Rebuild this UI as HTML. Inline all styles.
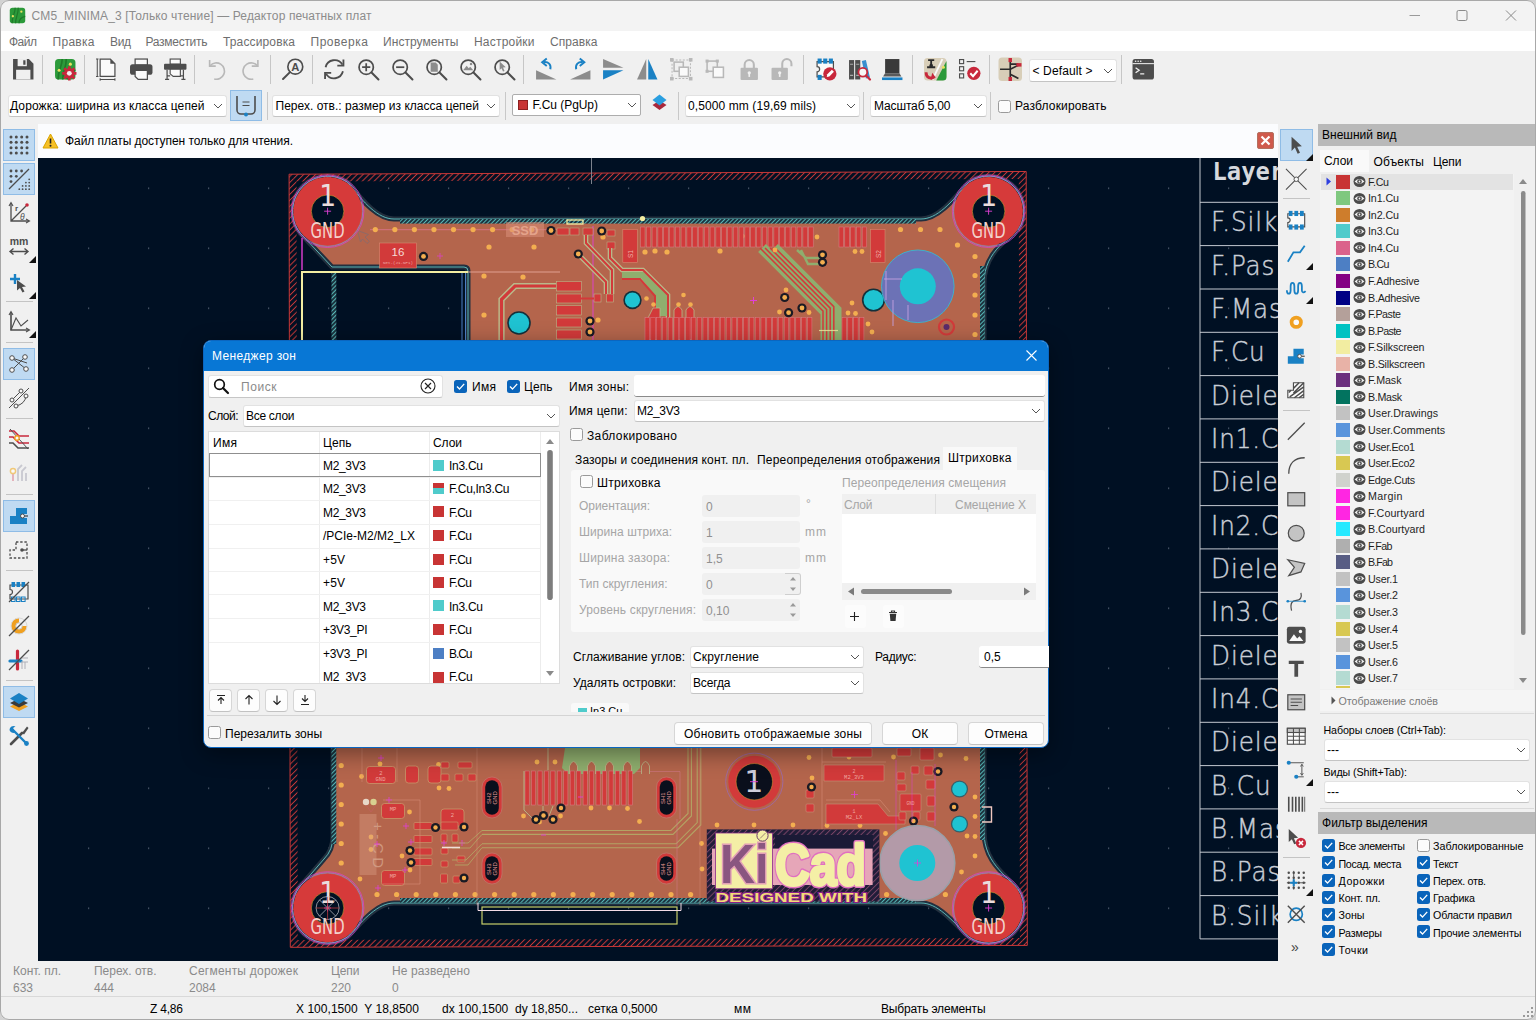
<!DOCTYPE html>
<html lang="ru"><head><meta charset="utf-8"><title>KiCad PCB Editor</title>
<style>
html,body{margin:0;padding:0;}
body{width:1536px;height:1020px;overflow:hidden;position:relative;background:#f0f0f0;font-family:"Liberation Sans",sans-serif;font-size:12px;}
.a{position:absolute;box-sizing:border-box;}
.t{position:absolute;white-space:pre;}
svg{overflow:visible;}
svg text{font-family:"Liberation Sans",sans-serif;}
</style></head>
<body>
<div class="a" style="left:0px;top:0px;width:1536px;height:31px;background:#f3f3f3;"></div>
<span class="t" style="top:7.5px;font-size:12px;line-height:16px;color:#8c8c8c;left:31.5px;letter-spacing:0.134px;">CM5_MINIMA_3 [Только чтение] — Редактор печатных плат</span>
<svg class="a" style="left:1409px;top:10px;" width="12" height="12" viewBox="0 0 12 12"><path d="M0.5 5.5 H11" stroke="#9a9a9a" stroke-width="1"/></svg>
<svg class="a" style="left:1456px;top:10px;" width="12" height="12" viewBox="0 0 12 12"><rect x="1" y="0.5" width="10" height="10" rx="1.5" fill="none" stroke="#8a8a8a" stroke-width="1"/></svg>
<svg class="a" style="left:1505px;top:10px;" width="12" height="12" viewBox="0 0 12 12"><path d="M1 0.5 L11 10.5 M11 0.5 L1 10.5" stroke="#8a8a8a" stroke-width="1"/></svg>
<div class="a" style="left:0px;top:31px;width:1536px;height:19.5px;background:#fff;"></div>
<span class="t" style="top:33.5px;font-size:12px;line-height:16px;color:#6e6e6e;left:9px;letter-spacing:-0.505px;">Файл</span>
<span class="t" style="top:33.5px;font-size:12px;line-height:16px;color:#6e6e6e;left:52.5px;letter-spacing:0.291px;">Правка</span>
<span class="t" style="top:33.5px;font-size:12px;line-height:16px;color:#6e6e6e;left:110px;letter-spacing:-0.359px;">Вид</span>
<span class="t" style="top:33.5px;font-size:12px;line-height:16px;color:#6e6e6e;left:145.5px;letter-spacing:-0.281px;">Разместить</span>
<span class="t" style="top:33.5px;font-size:12px;line-height:16px;color:#6e6e6e;left:223px;letter-spacing:0.138px;">Трассировка</span>
<span class="t" style="top:33.5px;font-size:12px;line-height:16px;color:#6e6e6e;left:310.5px;letter-spacing:0.536px;">Проверка</span>
<span class="t" style="top:33.5px;font-size:12px;line-height:16px;color:#6e6e6e;left:383px;letter-spacing:0.067px;">Инструменты</span>
<span class="t" style="top:33.5px;font-size:12px;line-height:16px;color:#6e6e6e;left:474px;letter-spacing:0.207px;">Настройки</span>
<span class="t" style="top:33.5px;font-size:12px;line-height:16px;color:#6e6e6e;left:550px;letter-spacing:0.070px;">Справка</span>
<div class="a" style="left:0px;top:50.5px;width:1536px;height:73.5px;background:#f0f0f0;"></div>
<div class="a" style="left:8px;top:95px;width:219px;height:22px;background:#fff;border:1px solid #e2e2e2;border-bottom-color:#c4c4c4;border-radius:3px;"></div>
<span class="t" style="top:98px;font-size:12px;line-height:16px;color:#000;left:10px;letter-spacing:0.107px;">Дорожка: ширина из класса цепей</span>
<svg class="a" style="left:213px;top:103.0px;" width="10" height="6" viewBox="0 0 10 6"><path d="M1 1 L5 5 L9 1" fill="none" stroke="#555" stroke-width="1"/></svg>
<div class="a" style="left:230px;top:90px;width:32px;height:31px;background:#bfdaf2;border:1px solid #8fbce6;"></div>
<div class="a" style="left:267px;top:92px;width:1px;height:28px;background:#c8c8c8;"></div>
<div class="a" style="left:272px;top:95px;width:228px;height:22px;background:#fff;border:1px solid #e2e2e2;border-bottom-color:#c4c4c4;border-radius:3px;"></div>
<span class="t" style="top:98px;font-size:12px;line-height:16px;color:#000;left:275.5px;letter-spacing:0.018px;">Перех. отв.: размер из класса цепей</span>
<svg class="a" style="left:486px;top:103.0px;" width="10" height="6" viewBox="0 0 10 6"><path d="M1 1 L5 5 L9 1" fill="none" stroke="#555" stroke-width="1"/></svg>
<div class="a" style="left:504.5px;top:92px;width:1px;height:28px;background:#c8c8c8;"></div>
<div class="a" style="left:511.5px;top:94px;width:129px;height:22px;background:#fff;border:1px solid #adadad;border-radius:2px;"></div>
<span class="t" style="top:97px;font-size:12px;line-height:16px;color:#000;left:532.5px;letter-spacing:-0.053px;">F.Cu (PgUp)</span>
<svg class="a" style="left:626.5px;top:102.0px;" width="10" height="6" viewBox="0 0 10 6"><path d="M1 1 L5 5 L9 1" fill="none" stroke="#555" stroke-width="1"/></svg>
<div class="a" style="left:518px;top:100px;width:10px;height:10px;background:#c83434;border:1px solid #8c2020;"></div>
<div class="a" style="left:678px;top:92px;width:1px;height:28px;background:#c8c8c8;"></div>
<div class="a" style="left:685.3px;top:95px;width:174.5px;height:22px;background:#fff;border:1px solid #e2e2e2;border-bottom-color:#c4c4c4;border-radius:3px;"></div>
<span class="t" style="top:98px;font-size:12px;line-height:16px;color:#000;left:688px;letter-spacing:0.093px;">0,5000 mm (19,69 mils)</span>
<svg class="a" style="left:845.8px;top:103.0px;" width="10" height="6" viewBox="0 0 10 6"><path d="M1 1 L5 5 L9 1" fill="none" stroke="#555" stroke-width="1"/></svg>
<div class="a" style="left:863px;top:92px;width:1px;height:28px;background:#c8c8c8;"></div>
<div class="a" style="left:870px;top:95px;width:117px;height:22px;background:#fff;border:1px solid #e2e2e2;border-bottom-color:#c4c4c4;border-radius:3px;"></div>
<span class="t" style="top:98px;font-size:12px;line-height:16px;color:#000;left:874px;letter-spacing:-0.139px;">Масштаб 5,00</span>
<svg class="a" style="left:973px;top:103.0px;" width="10" height="6" viewBox="0 0 10 6"><path d="M1 1 L5 5 L9 1" fill="none" stroke="#555" stroke-width="1"/></svg>
<div class="a" style="left:990px;top:92px;width:1px;height:28px;background:#c8c8c8;"></div>
<div class="a" style="left:998px;top:99.5px;width:13px;height:13px;background:#fbfbfb;border:1px solid #9a9a9a;border-radius:2.5px;"></div>
<span class="t" style="top:98px;font-size:12px;line-height:16px;color:#000;left:1015px;letter-spacing:0.165px;">Разблокировать</span>
<div class="a" style="left:36px;top:124px;width:1242px;height:34px;background:#fbfcfe;"></div>
<span class="t" style="top:133px;font-size:12px;line-height:16px;color:#000;left:65px;letter-spacing:-0.063px;">Файл платы доступен только для чтения.</span>
<svg class="a" style="left:42px;top:133px;" width="17" height="16" viewBox="0 0 17 16"><path d="M8.5 1 L16 15 H1 Z" fill="#f6c026" stroke="#d9a400" stroke-width="1" stroke-linejoin="round"/><path d="M8.5 5.5 V10.5" stroke="#222" stroke-width="1.6"/><circle cx="8.5" cy="12.7" r="1" fill="#222"/></svg>
<div class="a" style="left:1257px;top:132px;width:17px;height:17px;background:#cf5a4c;border:1px solid #b4705f;border-radius:2px;"><svg width="15" height="15" viewBox="0 0 15 15" style="position:absolute;left:0;top:0"><path d="M3.5 3.5 L11.5 11.5 M11.5 3.5 L3.5 11.5" stroke="#fff" stroke-width="2.2"/></svg></div>
<div class="a" style="left:0px;top:124px;width:38px;height:837px;background:#f0f0f0;"></div>
<div class="a" style="left:38px;top:158px;width:1240px;height:803px;background:#001023;"></div>
<div class="a" style="left:1278px;top:124px;width:38px;height:837px;background:#f0f0f0;"></div>
<div class="a" style="left:0px;top:961px;width:1536px;height:39px;background:#f0f0f0;"></div>
<div class="a" style="left:0px;top:996px;width:1536px;height:1px;background:#d9d9d9;"></div>
<span class="t" style="top:963px;font-size:12px;line-height:16px;color:#8a8a8a;left:13px;letter-spacing:0.004px;">Конт. пл.</span>
<span class="t" style="top:979.5px;font-size:12px;line-height:16px;color:#8a8a8a;left:13px;">633</span>
<span class="t" style="top:963px;font-size:12px;line-height:16px;color:#8a8a8a;left:94px;letter-spacing:-0.017px;">Перех. отв.</span>
<span class="t" style="top:979.5px;font-size:12px;line-height:16px;color:#8a8a8a;left:94px;">444</span>
<span class="t" style="top:963px;font-size:12px;line-height:16px;color:#8a8a8a;left:189px;letter-spacing:0.229px;">Сегменты дорожек</span>
<span class="t" style="top:979.5px;font-size:12px;line-height:16px;color:#8a8a8a;left:189px;">2084</span>
<span class="t" style="top:963px;font-size:12px;line-height:16px;color:#8a8a8a;left:331px;letter-spacing:-0.089px;">Цепи</span>
<span class="t" style="top:979.5px;font-size:12px;line-height:16px;color:#8a8a8a;left:331px;">220</span>
<span class="t" style="top:963px;font-size:12px;line-height:16px;color:#8a8a8a;left:392px;letter-spacing:0.089px;">Не разведено</span>
<span class="t" style="top:979.5px;font-size:12px;line-height:16px;color:#8a8a8a;left:392px;">0</span>
<div class="a" style="left:0px;top:997px;width:1536px;height:23px;background:#f0f0f0;"></div>
<span class="t" style="top:1000.5px;font-size:12px;line-height:16px;color:#000;left:150px;letter-spacing:-0.206px;">Z 4,86</span>
<span class="t" style="top:1000.5px;font-size:12px;line-height:16px;color:#000;left:296px;letter-spacing:0.033px;">X 100,1500  Y 18,8500</span>
<span class="t" style="top:1000.5px;font-size:12px;line-height:16px;color:#000;left:442px;letter-spacing:0.023px;">dx 100,1500  dy 18,850...</span>
<span class="t" style="top:1000.5px;font-size:12px;line-height:16px;color:#000;left:588px;letter-spacing:-0.045px;">сетка 0,5000</span>
<span class="t" style="top:1000.5px;font-size:12px;line-height:16px;color:#000;left:734px;letter-spacing:0.500px;">мм</span>
<span class="t" style="top:1000.5px;font-size:12px;line-height:16px;color:#000;left:881px;letter-spacing:-0.158px;">Выбрать элементы</span>
<svg class="a" style="left:0;top:0" width="1536" height="1020" viewBox="0 0 1536 1020"><defs>
<pattern id="hr" width="4.2" height="4.2" patternUnits="userSpaceOnUse" patternTransform="rotate(-45)"><path d="M0 2.1H4.2" stroke="#c83838" stroke-width="1"/></pattern>
<pattern id="ht" width="3" height="3" patternUnits="userSpaceOnUse" patternTransform="rotate(-45)"><rect width="3" height="3" fill="#1c3440"/><path d="M0 1.5H3" stroke="#58bcbc" stroke-width="0.95"/></pattern>
<pattern id="hl" width="4.2" height="4.2" patternUnits="userSpaceOnUse" patternTransform="rotate(-45)"><path d="M0 2.1H4.2" stroke="#7a4466" stroke-width="1"/></pattern>
<pattern id="gd" x="28" y="7.6" width="60" height="60" patternUnits="userSpaceOnUse"><rect x="0" y="0" width="1.2" height="1.2" fill="#5f6a7c"/></pattern>
<clipPath id="cv"><rect x="38" y="158" width="1240" height="803"/></clipPath>
</defs><g clip-path="url(#cv)"><rect x="38" y="157" width="1240" height="804" fill="url(#gd)"/><path d="M 394 219 H 921 C 937 219 951 203 968.4 182.4 A 35.2 35.2 0 0 1 1021.0 225.0 C 1012 238 984 250 984 283 V 832 C 984 866 1012 878 1021.0 894.2 A 35.2 35.2 0 0 1 968.4 936.8 C 951 919 937 903 921 903 H 394 C 378 903 364 919 347.8 936.8 A 35.2 35.2 0 0 1 305.0 881.0 L 324 859 Q 333 850 333 836 V 640 H 468 V 271 Q 468 267 464 267 H 332 L 305.0 238.2 A 35.2 35.2 0 0 1 347.8 182.4 C 364 203 378 219 394 219 Z" fill="#b4654c"/><path d="M 394 219 H 921 C 937 219 951 203 968.4 182.4 A 35.2 35.2 0 0 1 1021.0 225.0 C 1012 238 984 250 984 283 V 832 C 984 866 1012 878 1021.0 894.2 A 35.2 35.2 0 0 1 968.4 936.8 C 951 919 937 903 921 903 H 394 C 378 903 364 919 347.8 936.8 A 35.2 35.2 0 0 1 305.0 881.0 L 324 859 Q 333 850 333 836 V 640 H 468 V 271 Q 468 267 464 267 H 332 L 305.0 238.2 A 35.2 35.2 0 0 1 347.8 182.4 C 364 203 378 219 394 219 Z" fill="none" stroke="#22303f" stroke-width="5"/><path d="M 394 219 H 921 C 937 219 951 203 968.4 182.4 A 35.2 35.2 0 0 1 1021.0 225.0 C 1012 238 984 250 984 283 V 832 C 984 866 1012 878 1021.0 894.2 A 35.2 35.2 0 0 1 968.4 936.8 C 951 919 937 903 921 903 H 394 C 378 903 364 919 347.8 936.8 A 35.2 35.2 0 0 1 305.0 881.0 L 324 859 Q 333 850 333 836 V 640 H 468 V 271 Q 468 267 464 267 H 332 L 305.0 238.2 A 35.2 35.2 0 0 1 347.8 182.4 C 364 203 378 219 394 219 Z" fill="none" stroke="#5fc4c4" stroke-width="0.9" transform="translate(0 0)"/><rect x="400" y="219" width="516" height="4.6" fill="url(#ht)"/><rect x="400" y="898" width="516" height="4.6" fill="url(#ht)"/><rect x="331.5" y="272" width="4.8" height="572" fill="url(#ht)"/><rect x="980" y="266" width="4.6" height="574" fill="url(#ht)"/><polygon points="289.1,174.2 1026.2,171.5 1018.8,178.9 296.5,181.6" fill="url(#hr)"/><polygon points="1026.2,171.5 1027.3,945.4 1019.9,938.0 1018.8,178.9" fill="url(#hr)"/><polygon points="1027.3,945.4 290.3,947.3 297.7,939.9 1019.9,938.0" fill="url(#hr)"/><polygon points="290.3,947.3 289.1,174.2 296.5,181.6 297.7,939.9" fill="url(#hr)"/><polygon points="289.1,174.2 1026.2,171.5 1027.3,945.4 290.3,947.3" fill="none" stroke="#c83838" stroke-width="1"/><path d="M462 272 V340 M465.5 272 V340" stroke="#4d7fc4" stroke-width="1"/><path d="M302 238 V270" stroke="#e13fd6" stroke-width="1.4"/><path d="M302 340 V272 H468" fill="none" stroke="#f2eda1" stroke-width="2"/><path d="M468 272 H560" stroke="#e0a090" stroke-width="1"/><path d="M370 229.7 H560" stroke="#e77aa0" stroke-width="0.8" opacity=".8"/><circle cx="375.3" cy="229.6" r="2.6" fill="#f3ae50"/><circle cx="394.85" cy="229.6" r="2.6" fill="#f3ae50"/><circle cx="414.40000000000003" cy="229.6" r="2.6" fill="#f3ae50"/><circle cx="433.95000000000005" cy="229.6" r="2.6" fill="#f3ae50"/><circle cx="453.5" cy="229.6" r="2.6" fill="#f3ae50"/><circle cx="473.05" cy="229.6" r="2.6" fill="#f3ae50"/><circle cx="492.6" cy="229.6" r="2.6" fill="#f3ae50"/><circle cx="512.15" cy="229.6" r="2.6" fill="#f3ae50"/><circle cx="531.7" cy="229.6" r="2.6" fill="#f3ae50"/><circle cx="489" cy="247" r="2.6" fill="#f3ae50"/><circle cx="534" cy="247" r="2.6" fill="#f3ae50"/><circle cx="484" cy="276" r="2.6" fill="#f3ae50"/><circle cx="523" cy="277" r="2.6" fill="#f3ae50"/><circle cx="484" cy="315" r="2.6" fill="#f3ae50"/><circle cx="598" cy="320" r="2.6" fill="#f3ae50"/><circle cx="603" cy="237" r="2.6" fill="#f3ae50"/><circle cx="645" cy="252" r="2.6" fill="#f3ae50"/><circle cx="667" cy="252" r="2.6" fill="#f3ae50"/><circle cx="742" cy="236" r="2.6" fill="#f3ae50"/><circle cx="720" cy="251" r="2.6" fill="#f3ae50"/><circle cx="655" cy="251" r="2.6" fill="#f3ae50"/><rect x="379.5" y="243" width="37" height="25" fill="#d23a3a" stroke="#d58a70" stroke-width="0.6"/><text x="398" y="255.5" text-anchor="middle" font-size="11.5" fill="#f6dcd6">16</text><text x="398" y="263.5" text-anchor="middle" font-size="4.2" fill="#f0b0a8" style="font-family:'Liberation Mono',monospace">Net-(J1-NP1)</text><circle cx="423.5" cy="256.4" r="4.6" fill="#1a1a24"/><circle cx="423.5" cy="256.4" r="2.4" fill="#f3ae50"/><path d="M437 256 h6 M440 253 v6" stroke="#e13fd6" stroke-width="1" opacity=".7"/><rect x="506" y="222" width="38" height="15" fill="#d9907a" opacity=".55"/><text x="525" y="234.5" text-anchor="middle" font-size="13" fill="#e8a890" opacity=".9" style="font-weight:700">SSD</text><rect x="567" y="220" width="16" height="4" fill="none" stroke="#f2eda1" stroke-width="1.3"/><circle cx="642.5" cy="218.5" r="2.6" fill="#f2eda1"/><path d="M556 286 H515 L501.5 299.5 V340" fill="none" stroke="#b9b98a" stroke-width="6.2"/><path d="M556 286 H515 L501.5 299.5 V340" fill="none" stroke="#d23a3a" stroke-width="3.2"/><rect x="556.5" y="281.5" width="25" height="9.5" fill="#d23a3a" stroke="#b9b98a" stroke-width="0.6"/><rect x="556.5" y="294" width="25" height="9" fill="#d23a3a" stroke="#b9b98a" stroke-width="0.6"/><rect x="556.5" y="305.5" width="25" height="9.5" fill="#d23a3a" stroke="#b9b98a" stroke-width="0.6"/><rect x="556.5" y="318" width="25" height="9" fill="#d23a3a" stroke="#b9b98a" stroke-width="0.6"/><rect x="556.5" y="330" width="25" height="9" fill="#d23a3a" stroke="#b9b98a" stroke-width="0.6"/><path d="M593 226 V340" stroke="#e13fd6" stroke-width="0.9"/><rect x="594" y="294" width="7" height="8" fill="#d23a3a" stroke="#b9b98a" stroke-width="0.6"/><rect x="606.4" y="294" width="7" height="8" fill="#d23a3a" stroke="#b9b98a" stroke-width="0.6"/><path d="M581 298.5 H594" stroke="#d23a3a" stroke-width="2"/><rect x="557" y="228" width="12" height="7" fill="#d23a3a" stroke="#b9b98a" stroke-width="0.5"/><rect x="583" y="228" width="10" height="7" fill="#d23a3a" stroke="#b9b98a" stroke-width="0.5"/><rect x="607" y="230" width="8" height="6" fill="#d23a3a" stroke="#b9b98a" stroke-width="0.5"/><rect x="607" y="242" width="8" height="7" fill="#d23a3a" stroke="#b9b98a" stroke-width="0.5"/><rect x="570" y="228" width="9" height="7" fill="#d23a3a" stroke="#b9b98a" stroke-width="0.5"/><path d="M586 235 V243 L612 270 V294" fill="none" stroke="#b9b98a" stroke-width="4.6"/><path d="M580 256 L606 282 V294" fill="none" stroke="#b9b98a" stroke-width="4.6"/><path d="M610 248 V258 L622 270 H643 L668 295 V318" fill="none" stroke="#b9b98a" stroke-width="4.6"/><path d="M622 277 H640 L657 294 V318" fill="none" stroke="#b9b98a" stroke-width="4.6"/><path d="M622 272 H644 L667 294 V316 H656 V297 L641 278 H622Z" fill="#8fae6e"/><path d="M586 235 V243 L612 270 V294" fill="none" stroke="#d23a3a" stroke-width="2"/><path d="M580 256 L606 282 V294" fill="none" stroke="#d23a3a" stroke-width="2"/><path d="M610 248 V258 L622 270 H643 L668 295 V318" fill="none" stroke="#d23a3a" stroke-width="2"/><path d="M622 279 H640 L655 296 V318" fill="none" stroke="#d23a3a" stroke-width="2"/><circle cx="578.3" cy="254" r="4.6" fill="#1a1a24"/><circle cx="578.3" cy="254" r="2.4" fill="#f3ae50"/><circle cx="601.7" cy="231" r="4.6" fill="#1a1a24"/><circle cx="601.7" cy="231" r="2.4" fill="#f3ae50"/><circle cx="551" cy="230.5" r="4.6" fill="#1a1a24"/><circle cx="551" cy="230.5" r="2.4" fill="#f3ae50"/><circle cx="590" cy="321" r="4.6" fill="#1a1a24"/><circle cx="590" cy="321" r="2.4" fill="#f3ae50"/><circle cx="590" cy="332" r="4.6" fill="#1a1a24"/><circle cx="590" cy="332" r="2.4" fill="#f3ae50"/><rect x="622.8" y="229.5" width="14.5" height="33" fill="#d23a3a" stroke="#d58a70" stroke-width="0.6"/><rect x="870.5" y="229.5" width="14.5" height="33" fill="#d23a3a" stroke="#d58a70" stroke-width="0.6"/><text transform="translate(633 258) rotate(-90)" font-size="6.5" fill="#f0b0a8">S1</text><text transform="translate(880.5 258) rotate(-90)" font-size="6.5" fill="#f0b0a8">S2</text><circle cx="519" cy="323" r="11.799999999999999" fill="#14303a"/><circle cx="519" cy="323" r="10.2" fill="#1fc3d2"/><circle cx="632.5" cy="300" r="9.2" fill="#14303a"/><circle cx="632.5" cy="300" r="7.6" fill="#1fc3d2"/><circle cx="873.5" cy="300" r="11.6" fill="#14303a"/><circle cx="873.5" cy="300" r="10" fill="#1fc3d2"/><path d="M648 340 V318 L653 308 H660 V340Z M674 340 V310 Q678 303 682 310 V340Z M686 340 V310 Q690 303 694 310 V340Z" fill="#d23a3a" stroke="#b9b98a" stroke-width="0.8"/><circle cx="653.5" cy="304.5" r="2.3" fill="#f3ae50"/><circle cx="678.5" cy="304.5" r="2.3" fill="#f3ae50"/><circle cx="690.5" cy="304.5" r="2.3" fill="#f3ae50"/><circle cx="646.5" cy="298.5" r="2.3" fill="#f3ae50"/><circle cx="683.5" cy="295" r="2.3" fill="#f3ae50"/><rect x="640.5" y="227" width="4.5" height="20" fill="#d23a3a" stroke="#d9808a" stroke-width="0.5"/><rect x="646.3" y="227" width="4.5" height="20" fill="#d23a3a" stroke="#d9808a" stroke-width="0.5"/><rect x="652.1" y="227" width="4.5" height="20" fill="#d23a3a" stroke="#d9808a" stroke-width="0.5"/><rect x="657.9" y="227" width="4.5" height="20" fill="#d23a3a" stroke="#d9808a" stroke-width="0.5"/><rect x="663.7" y="227" width="4.5" height="20" fill="#d23a3a" stroke="#d9808a" stroke-width="0.5"/><rect x="669.5" y="227" width="4.5" height="20" fill="#d23a3a" stroke="#d9808a" stroke-width="0.5"/><rect x="675.3" y="227" width="4.5" height="20" fill="#d23a3a" stroke="#d9808a" stroke-width="0.5"/><rect x="681.1" y="227" width="4.5" height="20" fill="#d23a3a" stroke="#d9808a" stroke-width="0.5"/><rect x="686.9" y="227" width="4.5" height="20" fill="#d23a3a" stroke="#d9808a" stroke-width="0.5"/><rect x="692.7" y="227" width="4.5" height="20" fill="#d23a3a" stroke="#d9808a" stroke-width="0.5"/><rect x="698.5" y="227" width="4.5" height="20" fill="#d23a3a" stroke="#d9808a" stroke-width="0.5"/><rect x="704.3" y="227" width="4.5" height="20" fill="#d23a3a" stroke="#d9808a" stroke-width="0.5"/><rect x="710.1" y="227" width="4.5" height="20" fill="#d23a3a" stroke="#d9808a" stroke-width="0.5"/><rect x="715.9" y="227" width="4.5" height="20" fill="#d23a3a" stroke="#d9808a" stroke-width="0.5"/><rect x="721.7" y="227" width="4.5" height="20" fill="#d23a3a" stroke="#d9808a" stroke-width="0.5"/><rect x="727.5" y="227" width="4.5" height="20" fill="#d23a3a" stroke="#d9808a" stroke-width="0.5"/><rect x="733.3" y="227" width="4.5" height="20" fill="#d23a3a" stroke="#d9808a" stroke-width="0.5"/><rect x="739.1" y="227" width="4.5" height="20" fill="#d23a3a" stroke="#d9808a" stroke-width="0.5"/><rect x="744.9" y="227" width="4.5" height="20" fill="#d23a3a" stroke="#d9808a" stroke-width="0.5"/><rect x="750.7" y="227" width="4.5" height="20" fill="#d23a3a" stroke="#d9808a" stroke-width="0.5"/><rect x="756.5" y="227" width="4.5" height="20" fill="#d23a3a" stroke="#d9808a" stroke-width="0.5"/><rect x="762.3" y="227" width="4.5" height="20" fill="#d23a3a" stroke="#d9808a" stroke-width="0.5"/><rect x="768.1" y="227" width="4.5" height="20" fill="#d23a3a" stroke="#d9808a" stroke-width="0.5"/><rect x="773.9" y="227" width="4.5" height="20" fill="#d23a3a" stroke="#d9808a" stroke-width="0.5"/><rect x="779.7" y="227" width="4.5" height="20" fill="#d23a3a" stroke="#d9808a" stroke-width="0.5"/><rect x="785.5" y="227" width="4.5" height="20" fill="#d23a3a" stroke="#d9808a" stroke-width="0.5"/><rect x="791.3" y="227" width="4.5" height="20" fill="#d23a3a" stroke="#d9808a" stroke-width="0.5"/><rect x="797.1" y="227" width="4.5" height="20" fill="#d23a3a" stroke="#d9808a" stroke-width="0.5"/><rect x="802.9" y="227" width="4.5" height="20" fill="#d23a3a" stroke="#d9808a" stroke-width="0.5"/><rect x="808.7" y="227" width="4.5" height="20" fill="#d23a3a" stroke="#d9808a" stroke-width="0.5"/><rect x="839.0" y="227" width="4.5" height="20" fill="#d23a3a" stroke="#d9808a" stroke-width="0.5"/><rect x="844.8" y="227" width="4.5" height="20" fill="#d23a3a" stroke="#d9808a" stroke-width="0.5"/><rect x="850.6" y="227" width="4.5" height="20" fill="#d23a3a" stroke="#d9808a" stroke-width="0.5"/><rect x="856.4" y="227" width="4.5" height="20" fill="#d23a3a" stroke="#d9808a" stroke-width="0.5"/><rect x="862.2" y="227" width="4.5" height="20" fill="#d23a3a" stroke="#d9808a" stroke-width="0.5"/><rect x="645.0" y="317.5" width="4.5" height="23.5" fill="#d23a3a" stroke="#d9808a" stroke-width="0.5"/><rect x="650.8" y="317.5" width="4.5" height="23.5" fill="#d23a3a" stroke="#d9808a" stroke-width="0.5"/><rect x="656.6" y="317.5" width="4.5" height="23.5" fill="#d23a3a" stroke="#d9808a" stroke-width="0.5"/><rect x="662.4" y="317.5" width="4.5" height="23.5" fill="#d23a3a" stroke="#d9808a" stroke-width="0.5"/><rect x="668.2" y="317.5" width="4.5" height="23.5" fill="#d23a3a" stroke="#d9808a" stroke-width="0.5"/><rect x="674.0" y="317.5" width="4.5" height="23.5" fill="#d23a3a" stroke="#d9808a" stroke-width="0.5"/><rect x="679.8" y="317.5" width="4.5" height="23.5" fill="#d23a3a" stroke="#d9808a" stroke-width="0.5"/><rect x="685.6" y="317.5" width="4.5" height="23.5" fill="#d23a3a" stroke="#d9808a" stroke-width="0.5"/><rect x="691.4" y="317.5" width="4.5" height="23.5" fill="#d23a3a" stroke="#d9808a" stroke-width="0.5"/><rect x="697.2" y="317.5" width="4.5" height="23.5" fill="#d23a3a" stroke="#d9808a" stroke-width="0.5"/><rect x="703.0" y="317.5" width="4.5" height="23.5" fill="#d23a3a" stroke="#d9808a" stroke-width="0.5"/><rect x="708.8" y="317.5" width="4.5" height="23.5" fill="#d23a3a" stroke="#d9808a" stroke-width="0.5"/><rect x="714.6" y="317.5" width="4.5" height="23.5" fill="#d23a3a" stroke="#d9808a" stroke-width="0.5"/><rect x="720.4" y="317.5" width="4.5" height="23.5" fill="#d23a3a" stroke="#d9808a" stroke-width="0.5"/><rect x="726.2" y="317.5" width="4.5" height="23.5" fill="#d23a3a" stroke="#d9808a" stroke-width="0.5"/><rect x="732.0" y="317.5" width="4.5" height="23.5" fill="#d23a3a" stroke="#d9808a" stroke-width="0.5"/><rect x="737.8" y="317.5" width="4.5" height="23.5" fill="#d23a3a" stroke="#d9808a" stroke-width="0.5"/><rect x="743.6" y="317.5" width="4.5" height="23.5" fill="#d23a3a" stroke="#d9808a" stroke-width="0.5"/><rect x="749.4" y="317.5" width="4.5" height="23.5" fill="#d23a3a" stroke="#d9808a" stroke-width="0.5"/><rect x="755.2" y="317.5" width="4.5" height="23.5" fill="#d23a3a" stroke="#d9808a" stroke-width="0.5"/><rect x="761.0" y="317.5" width="4.5" height="23.5" fill="#d23a3a" stroke="#d9808a" stroke-width="0.5"/><rect x="766.8" y="317.5" width="4.5" height="23.5" fill="#d23a3a" stroke="#d9808a" stroke-width="0.5"/><rect x="772.6" y="317.5" width="4.5" height="23.5" fill="#d23a3a" stroke="#d9808a" stroke-width="0.5"/><rect x="778.4" y="317.5" width="4.5" height="23.5" fill="#d23a3a" stroke="#d9808a" stroke-width="0.5"/><rect x="784.2" y="317.5" width="4.5" height="23.5" fill="#d23a3a" stroke="#d9808a" stroke-width="0.5"/><rect x="790.0" y="317.5" width="4.5" height="23.5" fill="#d23a3a" stroke="#d9808a" stroke-width="0.5"/><rect x="795.8" y="317.5" width="4.5" height="23.5" fill="#d23a3a" stroke="#d9808a" stroke-width="0.5"/><rect x="801.6" y="317.5" width="4.5" height="23.5" fill="#d23a3a" stroke="#d9808a" stroke-width="0.5"/><rect x="807.4" y="317.5" width="4.5" height="23.5" fill="#d23a3a" stroke="#d9808a" stroke-width="0.5"/><rect x="842.0" y="317.5" width="4.5" height="23.5" fill="#d23a3a" stroke="#d9808a" stroke-width="0.5"/><rect x="847.8" y="317.5" width="4.5" height="23.5" fill="#d23a3a" stroke="#d9808a" stroke-width="0.5"/><rect x="853.6" y="317.5" width="4.5" height="23.5" fill="#d23a3a" stroke="#d9808a" stroke-width="0.5"/><rect x="859.4" y="317.5" width="4.5" height="23.5" fill="#d23a3a" stroke="#d9808a" stroke-width="0.5"/><path d="M762 248 L826 312 V340 M774 248 L836 310 V340" fill="none" stroke="#8fae6e" stroke-width="11"/><path d="M760.0 248 L823.0 311.0 V340" fill="none" stroke="#d23a3a" stroke-width="1.5"/><path d="M765.04 248 L826.6 309.56 V340" fill="none" stroke="#d23a3a" stroke-width="1.5"/><path d="M770.08 248 L830.2 308.12 V340" fill="none" stroke="#d23a3a" stroke-width="1.5"/><path d="M775.12 248 L833.8 306.68 V340" fill="none" stroke="#d23a3a" stroke-width="1.5"/><path d="M797 250 L806 258 H821 M801 250 L808 264 H821" fill="none" stroke="#8fae6e" stroke-width="2.4"/><circle cx="822.5" cy="254.8" r="4.6" fill="#1a1a24"/><circle cx="822.5" cy="254.8" r="2.4" fill="#f3ae50"/><circle cx="822.5" cy="262.3" r="4.6" fill="#1a1a24"/><circle cx="822.5" cy="262.3" r="2.4" fill="#f3ae50"/><circle cx="784.7" cy="297.5" r="4.6" fill="#1a1a24"/><circle cx="784.7" cy="297.5" r="2.4" fill="#f3ae50"/><circle cx="788.6" cy="312.7" r="4.6" fill="#1a1a24"/><circle cx="788.6" cy="312.7" r="2.4" fill="#f3ae50"/><circle cx="802" cy="308" r="4.6" fill="#1a1a24"/><circle cx="802" cy="308" r="2.4" fill="#f3ae50"/><circle cx="817" cy="237" r="2.4" fill="#f3ae50"/><circle cx="775" cy="250" r="2.4" fill="#f3ae50"/><circle cx="786" cy="290" r="2.4" fill="#f3ae50"/><circle cx="779.5" cy="312" r="2.4" fill="#f3ae50"/><circle cx="809" cy="312.5" r="2.4" fill="#f3ae50"/><circle cx="852" cy="303" r="2.4" fill="#f3ae50"/><circle cx="848" cy="313" r="2.4" fill="#f3ae50"/><circle cx="855.5" cy="313.5" r="2.4" fill="#f3ae50"/><circle cx="855" cy="251.5" r="2.4" fill="#f3ae50"/><circle cx="862" cy="251.5" r="2.4" fill="#f3ae50"/><circle cx="868" cy="324" r="2.4" fill="#f3ae50"/><circle cx="872" cy="332" r="2.4" fill="#f3ae50"/><path d="M750 300.5 h7 M753.5 297 v7" stroke="#e13fd6" stroke-width="1"/><path d="M819 330.5 H838" stroke="#f2eda1" stroke-width="1.2" opacity=".8"/><circle cx="917.8" cy="286.3" r="36.3" fill="#6c72b6" stroke="#38b8d0" stroke-width="0.9"/><circle cx="917.8" cy="286.3" r="18" fill="#1fc3d2"/><path d="M884 279 H902 M886 271 V300 M893 300 V326 M908 305 V320" stroke="#c4a0e0" stroke-width="0.9" fill="none"/><circle cx="946.5" cy="327" r="7.5" fill="none" stroke="#d23a3a" stroke-width="2.2"/><circle cx="946.5" cy="327" r="3" fill="#5a2a6a"/><circle cx="900.5" cy="229.5" r="2.6" fill="#f3ae50"/><circle cx="920.5" cy="229.5" r="2.6" fill="#f3ae50"/><circle cx="940" cy="229.5" r="2.6" fill="#f3ae50"/><circle cx="957.5" cy="245" r="2.6" fill="#f3ae50"/><circle cx="975" cy="256.5" r="2.6" fill="#f3ae50"/><circle cx="975" cy="275.5" r="2.6" fill="#f3ae50"/><circle cx="975" cy="295" r="2.6" fill="#f3ae50"/><circle cx="975" cy="315" r="2.6" fill="#f3ae50"/><circle cx="975" cy="334.5" r="2.6" fill="#f3ae50"/><path d="M357.5 230.5 L368.5 234.5 L365 237 L369.5 241.5 L367 243.5 L362.5 239 L360.5 242Z" fill="none" stroke="#8a6a6a" stroke-width="0.9"/><circle cx="341.2" cy="765.5" r="2.6" fill="#f3ae50"/><circle cx="341.2" cy="785.0" r="2.6" fill="#f3ae50"/><circle cx="341.2" cy="804.5" r="2.6" fill="#f3ae50"/><circle cx="341.2" cy="824.0" r="2.6" fill="#f3ae50"/><circle cx="341.2" cy="843.5" r="2.6" fill="#f3ae50"/><circle cx="341.2" cy="863.0" r="2.6" fill="#f3ae50"/><circle cx="377.0" cy="894.5" r="2.6" fill="#f3ae50"/><circle cx="396.6" cy="894.5" r="2.6" fill="#f3ae50"/><circle cx="416.2" cy="894.5" r="2.6" fill="#f3ae50"/><circle cx="435.8" cy="894.5" r="2.6" fill="#f3ae50"/><circle cx="455.4" cy="894.5" r="2.6" fill="#f3ae50"/><circle cx="475.0" cy="894.5" r="2.6" fill="#f3ae50"/><circle cx="494.6" cy="894.5" r="2.6" fill="#f3ae50"/><circle cx="514.2" cy="894.5" r="2.6" fill="#f3ae50"/><circle cx="533.8" cy="894.5" r="2.6" fill="#f3ae50"/><circle cx="553.4" cy="894.5" r="2.6" fill="#f3ae50"/><circle cx="573.0" cy="894.5" r="2.6" fill="#f3ae50"/><circle cx="592.6" cy="894.5" r="2.6" fill="#f3ae50"/><circle cx="612.2" cy="894.5" r="2.6" fill="#f3ae50"/><circle cx="631.8" cy="894.5" r="2.6" fill="#f3ae50"/><circle cx="651.4000000000001" cy="894.5" r="2.6" fill="#f3ae50"/><circle cx="671.0" cy="894.5" r="2.6" fill="#f3ae50"/><circle cx="690.6" cy="894.5" r="2.6" fill="#f3ae50"/><circle cx="710.2" cy="894.5" r="2.6" fill="#f3ae50"/><circle cx="729.8" cy="894.5" r="2.6" fill="#f3ae50"/><circle cx="749.4000000000001" cy="894.5" r="2.6" fill="#f3ae50"/><circle cx="769.0" cy="894.5" r="2.6" fill="#f3ae50"/><circle cx="788.6" cy="894.5" r="2.6" fill="#f3ae50"/><circle cx="808.2" cy="894.5" r="2.6" fill="#f3ae50"/><circle cx="827.8" cy="894.5" r="2.6" fill="#f3ae50"/><circle cx="847.4000000000001" cy="894.5" r="2.6" fill="#f3ae50"/><circle cx="867.0" cy="894.5" r="2.6" fill="#f3ae50"/><circle cx="886.6" cy="894.5" r="2.6" fill="#f3ae50"/><circle cx="906.2" cy="894.5" r="2.6" fill="#f3ae50"/><circle cx="925.8000000000001" cy="894.5" r="2.6" fill="#f3ae50"/><circle cx="945.4000000000001" cy="894.5" r="2.6" fill="#f3ae50"/><circle cx="965.0" cy="894.5" r="2.6" fill="#f3ae50"/><circle cx="361.5" cy="776.5" r="2.4" fill="#f3ae50"/><circle cx="380" cy="764" r="2.4" fill="#f3ae50"/><circle cx="438.5" cy="764.5" r="2.4" fill="#f3ae50"/><circle cx="439" cy="788" r="2.4" fill="#f3ae50"/><circle cx="449" cy="788.5" r="2.4" fill="#f3ae50"/><circle cx="409.5" cy="812" r="2.4" fill="#f3ae50"/><circle cx="402" cy="856" r="2.4" fill="#f3ae50"/><circle cx="410" cy="870" r="2.4" fill="#f3ae50"/><circle cx="360" cy="879" r="2.4" fill="#f3ae50"/><circle cx="371" cy="837" r="2.4" fill="#f3ae50"/><circle cx="371" cy="849.5" r="2.4" fill="#f3ae50"/><circle cx="537" cy="762" r="2.4" fill="#f3ae50"/><circle cx="523.5" cy="816" r="2.4" fill="#f3ae50"/><circle cx="539.5" cy="822" r="2.4" fill="#f3ae50"/><circle cx="560.5" cy="816" r="2.4" fill="#f3ae50"/><circle cx="591" cy="808" r="2.4" fill="#f3ae50"/><circle cx="609.5" cy="808" r="2.4" fill="#f3ae50"/><circle cx="627.5" cy="808.5" r="2.4" fill="#f3ae50"/><circle cx="639.5" cy="821.5" r="2.4" fill="#f3ae50"/><circle cx="573.5" cy="762" r="2.4" fill="#f3ae50"/><circle cx="591" cy="762" r="2.4" fill="#f3ae50"/><circle cx="609.5" cy="762" r="2.4" fill="#f3ae50"/><circle cx="627.5" cy="762" r="2.4" fill="#f3ae50"/><circle cx="555" cy="762" r="2.4" fill="#f3ae50"/><circle cx="701.5" cy="843.5" r="2.4" fill="#f3ae50"/><circle cx="702" cy="869" r="2.4" fill="#f3ae50"/><circle cx="717" cy="825" r="2.4" fill="#f3ae50"/><circle cx="754" cy="825" r="2.4" fill="#f3ae50"/><circle cx="793" cy="825" r="2.4" fill="#f3ae50"/><circle cx="827" cy="825.5" r="2.4" fill="#f3ae50"/><circle cx="860" cy="825.5" r="2.4" fill="#f3ae50"/><circle cx="885.5" cy="833.5" r="2.4" fill="#f3ae50"/><circle cx="940.5" cy="755" r="2.4" fill="#f3ae50"/><circle cx="966" cy="758.5" r="2.4" fill="#f3ae50"/><circle cx="975" cy="797" r="2.4" fill="#f3ae50"/><circle cx="975" cy="816.5" r="2.4" fill="#f3ae50"/><circle cx="975" cy="836.5" r="2.4" fill="#f3ae50"/><circle cx="975" cy="856" r="2.4" fill="#f3ae50"/><circle cx="961.5" cy="872" r="2.4" fill="#f3ae50"/><circle cx="967" cy="836" r="2.4" fill="#f3ae50"/><circle cx="809" cy="757.5" r="2.4" fill="#f3ae50"/><circle cx="849" cy="757" r="2.4" fill="#f3ae50"/><circle cx="812" cy="778" r="2.4" fill="#f3ae50"/><circle cx="893.5" cy="757" r="2.4" fill="#f3ae50"/><rect x="366.5" y="766.5" width="29" height="17" rx="3" fill="#d23a3a" stroke="#c9a070" stroke-width="0.7"/><text x="381.0" y="774.5" text-anchor="middle" font-size="5.5" fill="#f0a8a0" style="font-family:'Liberation Mono',monospace">2</text><rect x="381.5" y="803.5" width="23" height="15" rx="3" fill="#d23a3a" stroke="#c9a070" stroke-width="0.7"/><text x="393.0" y="810.5" text-anchor="middle" font-size="5.5" fill="#f0a8a0" style="font-family:'Liberation Mono',monospace">MP</text><rect x="381.5" y="870.5" width="23" height="15" rx="3" fill="#d23a3a" stroke="#c9a070" stroke-width="0.7"/><text x="393.0" y="877.5" text-anchor="middle" font-size="5.5" fill="#f0a8a0" style="font-family:'Liberation Mono',monospace">MP</text><rect x="441" y="809" width="23" height="17" rx="3" fill="#d23a3a" stroke="#c9a070" stroke-width="0.7"/><text x="452.5" y="817.0" text-anchor="middle" font-size="5.5" fill="#f0a8a0" style="font-family:'Liberation Mono',monospace">2</text><rect x="405.5" y="766" width="13" height="17" rx="3" fill="#d23a3a" stroke="#c9a070" stroke-width="0.7"/><rect x="428" y="766" width="13" height="17" rx="3" fill="#d23a3a" stroke="#c9a070" stroke-width="0.7"/><text x="380.5" y="781" text-anchor="middle" font-size="5.5" fill="#f0a8a0" style="font-family:'Liberation Mono',monospace">GND</text><rect x="414" y="822.5" width="18" height="7" rx="1" fill="#d23a3a" stroke="#c9a070" stroke-width="0.6"/><rect x="414" y="835.5" width="18" height="7" rx="1" fill="#d23a3a" stroke="#c9a070" stroke-width="0.6"/><rect x="414" y="848" width="18" height="7" rx="1" fill="#d23a3a" stroke="#c9a070" stroke-width="0.6"/><rect x="414" y="858.5" width="18" height="7" rx="1" fill="#d23a3a" stroke="#c9a070" stroke-width="0.6"/><rect x="441" y="822" width="17" height="8" rx="1" fill="#d23a3a" stroke="#c9a070" stroke-width="0.6"/><rect x="441" y="834" width="6" height="8" rx="1" fill="#d23a3a" stroke="#c9a070" stroke-width="0.6"/><rect x="452" y="834" width="6" height="8" rx="1" fill="#d23a3a" stroke="#c9a070" stroke-width="0.6"/><rect x="441" y="848" width="7" height="6" rx="1" fill="#d23a3a" stroke="#c9a070" stroke-width="0.6"/><rect x="441" y="861" width="7" height="6" rx="1" fill="#d23a3a" stroke="#c9a070" stroke-width="0.6"/><rect x="457" y="856" width="8" height="6" rx="1" fill="#d23a3a" stroke="#c9a070" stroke-width="0.6"/><rect x="440.5" y="874" width="7" height="9" rx="1" fill="#d23a3a" stroke="#c9a070" stroke-width="0.6"/><rect x="453" y="876" width="7" height="7" rx="1" fill="#d23a3a" stroke="#c9a070" stroke-width="0.6"/><rect x="441" y="774" width="8" height="7" rx="1" fill="#d23a3a" stroke="#c9a070" stroke-width="0.6"/><rect x="455" y="774" width="8" height="7" rx="1" fill="#d23a3a" stroke="#c9a070" stroke-width="0.6"/><rect x="468" y="774" width="8" height="7" rx="1" fill="#d23a3a" stroke="#c9a070" stroke-width="0.6"/><rect x="441" y="762" width="8" height="6" rx="1" fill="#d23a3a" stroke="#c9a070" stroke-width="0.6"/><rect x="458" y="762" width="14" height="6" rx="1" fill="#d23a3a" stroke="#c9a070" stroke-width="0.6"/><circle cx="435.5" cy="827.5" r="4.6" fill="#1a1a24"/><circle cx="435.5" cy="827.5" r="2.2" fill="#f3ae50"/><circle cx="464" cy="827" r="4.6" fill="#1a1a24"/><circle cx="464" cy="827" r="2.2" fill="#f3ae50"/><circle cx="410" cy="850.5" r="4.6" fill="#1a1a24"/><circle cx="410" cy="850.5" r="2.2" fill="#f3ae50"/><circle cx="411" cy="862.5" r="4.6" fill="#1a1a24"/><circle cx="411" cy="862.5" r="2.2" fill="#f3ae50"/><circle cx="464" cy="878" r="4.6" fill="#1a1a24"/><circle cx="464" cy="878" r="2.2" fill="#f3ae50"/><rect x="359.5" y="814" width="17" height="61" fill="#d9a088" opacity=".4"/><text transform="translate(373 822) rotate(90)" font-size="15" fill="#d8a890" opacity=".75" textLength="46">+-CD</text><path d="M383 800 H420 V884 H383" fill="none" stroke="#d8907a" stroke-width="0.8" opacity=".7"/><path d="M362 748 V782 M397 748 V782 M477 748 V905" stroke="#d8907a" stroke-width="0.8" opacity=".6"/><path d="M378 758h6M381 755v6" stroke="#e13fd6" stroke-width="0.8"/><path d="M386 800h6M389 797v6" stroke="#e13fd6" stroke-width="0.8"/><path d="M374 844h6M377 841v6" stroke="#e13fd6" stroke-width="0.8"/><path d="M402 870h6M405 867v6" stroke="#e13fd6" stroke-width="0.8"/><path d="M375 888h6M378 885v6" stroke="#e13fd6" stroke-width="0.8"/><path d="M403 826h6M406 823v6" stroke="#e13fd6" stroke-width="0.8"/><path d="M408 842h6M411 839v6" stroke="#e13fd6" stroke-width="0.8"/><path d="M441 843h6M444 840v6" stroke="#e13fd6" stroke-width="0.8"/><path d="M459 843h6M462 840v6" stroke="#e13fd6" stroke-width="0.8"/><circle cx="366" cy="802" r="3.2" fill="#e8d8c8"/><circle cx="373.5" cy="802" r="3.2" fill="#d8d090"/><path d="M366 805 L371 812 L376 805" fill="none" stroke="#c06060" stroke-width="0.7"/><path d="M482 830.5 H671 L688 813.5 V748" fill="none" stroke="#b3a364" stroke-width="1.1"/><path d="M482 834.4 H673 L691.4 816 V748" fill="none" stroke="#b3a364" stroke-width="1.1"/><path d="M482 843.8 H676 L697.2 822.6 V748" fill="none" stroke="#b3a364" stroke-width="1.1"/><path d="M482 847.7 H678 L700.8 825 V748" fill="none" stroke="#b3a364" stroke-width="1.1"/><path d="M482 830.5 L468 843 H452 M482 834.4 L470 848 H452 M482 843.8 L466 860 H452 M482 847.7 L468 865 H455" fill="none" stroke="#b3a364" stroke-width="0.9"/><path d="M677 819 V905 M680 771.5 V819 M620 771.5 H680" fill="none" stroke="#d07a8a" stroke-width="0.8" opacity=".7"/><path d="M442 847.5 H460" stroke="#f0e0d8" stroke-width="1.6"/><rect x="482" y="777" width="20" height="41" rx="10" fill="#d23a3a" stroke="#c07a70" stroke-width="0.7"/><rect x="485.2" y="780.2" width="13.6" height="34.6" rx="6.8" fill="#0a0f1c"/><text transform="translate(490.5 804.0) rotate(-90)" font-size="6" fill="#e89a94">SH2</text><text transform="translate(496.5 804.5) rotate(-90)" font-size="6" fill="#e89a94">GND</text><rect x="482" y="853" width="20" height="31" rx="10" fill="#d23a3a" stroke="#c07a70" stroke-width="0.7"/><rect x="485.2" y="856.2" width="13.6" height="24.6" rx="6.8" fill="#0a0f1c"/><text transform="translate(490.5 875.0) rotate(-90)" font-size="6" fill="#e89a94">SH3</text><text transform="translate(496.5 875.5) rotate(-90)" font-size="6" fill="#e89a94">GND</text><rect x="656.5" y="777" width="20" height="41" rx="10" fill="#d23a3a" stroke="#c07a70" stroke-width="0.7"/><rect x="659.7" y="780.2" width="13.6" height="34.6" rx="6.8" fill="#0a0f1c"/><text transform="translate(665.0 804.0) rotate(-90)" font-size="6" fill="#e89a94">SH1</text><text transform="translate(671.0 804.5) rotate(-90)" font-size="6" fill="#e89a94">GND</text><rect x="656.5" y="853" width="20" height="31" rx="10" fill="#d23a3a" stroke="#c07a70" stroke-width="0.7"/><rect x="659.7" y="856.2" width="13.6" height="24.6" rx="6.8" fill="#0a0f1c"/><text transform="translate(665.0 875.0) rotate(-90)" font-size="6" fill="#e89a94">SH4</text><text transform="translate(671.0 875.5) rotate(-90)" font-size="6" fill="#e89a94">GND</text><path d="M565 748 H640 V768 L634 774 H568 L562 768Z" fill="#8fae6e"/><path d="M569.5 774 V766 Q573.5 757 577.5 766 V774" fill="#b4654c" stroke="#b9b98a" stroke-width="0.8"/><path d="M587.5 774 V766 Q591.5 757 595.5 766 V774" fill="#b4654c" stroke="#b9b98a" stroke-width="0.8"/><path d="M605.5 774 V766 Q609.5 757 613.5 766 V774" fill="#b4654c" stroke="#b9b98a" stroke-width="0.8"/><path d="M623.5 774 V766 Q627.5 757 631.5 766 V774" fill="#b4654c" stroke="#b9b98a" stroke-width="0.8"/><path d="M641.5 774 V766 Q645.5 757 649.5 766 V774" fill="#b4654c" stroke="#b9b98a" stroke-width="0.8"/><rect x="525.0" y="771" width="4.2" height="34" fill="#d23a3a" stroke="#d9808a" stroke-width="0.5"/><rect x="531.5" y="771" width="4.2" height="34" fill="#d23a3a" stroke="#d9808a" stroke-width="0.5"/><rect x="537.9" y="771" width="4.2" height="34" fill="#d23a3a" stroke="#d9808a" stroke-width="0.5"/><rect x="544.4" y="771" width="4.2" height="34" fill="#d23a3a" stroke="#d9808a" stroke-width="0.5"/><rect x="550.8" y="771" width="4.2" height="34" fill="#d23a3a" stroke="#d9808a" stroke-width="0.5"/><rect x="557.3" y="771" width="4.2" height="34" fill="#d23a3a" stroke="#d9808a" stroke-width="0.5"/><rect x="563.7" y="771" width="4.2" height="34" fill="#d23a3a" stroke="#d9808a" stroke-width="0.5"/><rect x="570.2" y="771" width="4.2" height="34" fill="#d23a3a" stroke="#d9808a" stroke-width="0.5"/><rect x="576.6" y="771" width="4.2" height="34" fill="#d23a3a" stroke="#d9808a" stroke-width="0.5"/><rect x="583.1" y="771" width="4.2" height="34" fill="#d23a3a" stroke="#d9808a" stroke-width="0.5"/><rect x="589.5" y="771" width="4.2" height="34" fill="#d23a3a" stroke="#d9808a" stroke-width="0.5"/><rect x="596.0" y="771" width="4.2" height="34" fill="#d23a3a" stroke="#d9808a" stroke-width="0.5"/><rect x="602.4" y="771" width="4.2" height="34" fill="#d23a3a" stroke="#d9808a" stroke-width="0.5"/><rect x="608.9" y="771" width="4.2" height="34" fill="#d23a3a" stroke="#d9808a" stroke-width="0.5"/><rect x="615.3" y="771" width="4.2" height="34" fill="#d23a3a" stroke="#d9808a" stroke-width="0.5"/><rect x="621.8" y="771" width="4.2" height="34" fill="#d23a3a" stroke="#d9808a" stroke-width="0.5"/><rect x="628.2" y="771" width="4.2" height="34" fill="#d23a3a" stroke="#d9808a" stroke-width="0.5"/><path d="M524 771 V810 L532 818 M543 806 V815 L536 821 M553 806 L549 816 M548 748 V770" fill="none" stroke="#b9b98a" stroke-width="0.9"/><circle cx="561" cy="808" r="4.6" fill="#1a1a24"/><circle cx="561" cy="808" r="2.2" fill="#f3ae50"/><circle cx="543.5" cy="815.5" r="4.6" fill="#1a1a24"/><circle cx="543.5" cy="815.5" r="2.2" fill="#f3ae50"/><circle cx="553" cy="819.5" r="4.6" fill="#1a1a24"/><circle cx="553" cy="819.5" r="2.2" fill="#f3ae50"/><circle cx="536" cy="819.5" r="4.6" fill="#1a1a24"/><circle cx="536" cy="819.5" r="2.2" fill="#f3ae50"/><path d="M578 797 h5 M541 835 h5" stroke="#e13fd6" stroke-width="0.9"/><rect x="482" y="907" width="195" height="17" fill="none" stroke="#c6cf6a" stroke-width="1.2"/><path d="M478 903 V910.5 H681 V903" fill="none" stroke="#f4dce6" stroke-width="1"/><path d="M700 748 V905" stroke="#d8907a" stroke-width="0.8" opacity=".5"/><circle cx="754.3" cy="781.7" r="28.6" fill="none" stroke="#9a6ab0" stroke-width="0.8"/><circle cx="754.3" cy="781.7" r="26" fill="#d23a3a"/><circle cx="754.3" cy="781.7" r="18.2" fill="#0a0f1c" stroke="#d8a030" stroke-width="0.5"/><text x="753.8" y="792.3" text-anchor="middle" font-size="30" fill="#cfcfdc" style="font-family:'DejaVu Sans',sans-serif">1</text><path d="M750 781.7 h8" stroke="#e13fd6" stroke-width="0.9"/><path d="M824 765 H884 V781 H824Z M826 804 H878 L888 816 H905 V824 H826Z" fill="#d23a3a" stroke="#c9907a" stroke-width="0.6"/><path d="M822 748 V835 M822 762 H886 M826 800 H880 L890 812" fill="none" stroke="#d8907a" stroke-width="0.8" opacity=".7"/><text x="854" y="772.5" text-anchor="middle" font-size="5" fill="#f0a8a0" style="font-family:'Liberation Mono',monospace">2</text><text x="854" y="779" text-anchor="middle" font-size="5.5" fill="#f0a8a0" style="font-family:'Liberation Mono',monospace">M2_3V3</text><text x="854" y="812.5" text-anchor="middle" font-size="5" fill="#f0a8a0" style="font-family:'Liberation Mono',monospace">1</text><text x="854" y="819" text-anchor="middle" font-size="5.5" fill="#f0a8a0" style="font-family:'Liberation Mono',monospace">M2_LX</text><path d="M851 794.5 h7 M854.5 791 v7" stroke="#e13fd6" stroke-width="0.8"/><rect x="806" y="790" width="8" height="8" rx="1" fill="#d23a3a" stroke="#c9907a" stroke-width="0.6"/><rect x="806" y="804" width="8" height="8" rx="1" fill="#d23a3a" stroke="#c9907a" stroke-width="0.6"/><rect x="897" y="772" width="8" height="8" rx="1" fill="#d23a3a" stroke="#c9907a" stroke-width="0.6"/><rect x="897" y="784" width="9" height="7" rx="1" fill="#d23a3a" stroke="#c9907a" stroke-width="0.6"/><rect x="911" y="766" width="8" height="8" rx="1" fill="#d23a3a" stroke="#c9907a" stroke-width="0.6"/><rect x="900" y="794" width="21" height="17" rx="1" fill="#d23a3a" stroke="#c9907a" stroke-width="0.6"/><rect x="924" y="766" width="9" height="9" rx="1" fill="#d23a3a" stroke="#c9907a" stroke-width="0.6"/><rect x="926" y="780" width="9" height="9" rx="1" fill="#d23a3a" stroke="#c9907a" stroke-width="0.6"/><rect x="927" y="796" width="8" height="10" rx="1" fill="#d23a3a" stroke="#c9907a" stroke-width="0.6"/><rect x="927" y="812" width="8" height="9" rx="1" fill="#d23a3a" stroke="#c9907a" stroke-width="0.6"/><rect x="913" y="812" width="7" height="8" rx="1" fill="#d23a3a" stroke="#c9907a" stroke-width="0.6"/><rect x="899" y="812" width="7" height="8" rx="1" fill="#d23a3a" stroke="#c9907a" stroke-width="0.6"/><rect x="832" y="748" width="40" height="9" rx="1" fill="#d23a3a" stroke="#c9907a" stroke-width="0.6"/><rect x="897" y="748" width="14" height="8" rx="1" fill="#d23a3a" stroke="#c9907a" stroke-width="0.6"/><rect x="920" y="748" width="14" height="12" rx="1" fill="#d23a3a" stroke="#c9907a" stroke-width="0.6"/><text x="910.5" y="805" text-anchor="middle" font-size="4.5" fill="#f0a8a0" style="font-family:'Liberation Mono',monospace">GND</text><circle cx="811.5" cy="787" r="4.6" fill="#1a1a24"/><circle cx="811.5" cy="787" r="2.2" fill="#f3ae50"/><circle cx="938" cy="771.5" r="4.6" fill="#1a1a24"/><circle cx="938" cy="771.5" r="2.2" fill="#f3ae50"/><circle cx="913.5" cy="821" r="4.6" fill="#1a1a24"/><circle cx="913.5" cy="821" r="2.2" fill="#f3ae50"/><circle cx="954" cy="807" r="4.6" fill="#1a1a24"/><circle cx="954" cy="807" r="2.2" fill="#f3ae50"/><path d="M896 760 V830 M912 772 V822 M935 764 V826" stroke="#e13fd6" stroke-width="0.7" opacity=".7"/><circle cx="959.5" cy="789" r="8.6" fill="#35606a"/><circle cx="959.5" cy="789" r="7.3" fill="#1fc3d2"/><circle cx="959.5" cy="824" r="8.6" fill="#35606a"/><circle cx="959.5" cy="824" r="7.3" fill="#1fc3d2"/><path d="M982 807 H991.5 V822 H982" fill="none" stroke="#f0c8c0" stroke-width="1.4"/><circle cx="917.3" cy="863" r="37.5" fill="#b39aa8" stroke="#9aa0a8" stroke-width="1.6"/><circle cx="917.3" cy="863" r="18" fill="#1fc3d2"/><path d="M914 863 h7 M917.5 859.5 v7" stroke="#e13fd6" stroke-width="0.8"/><rect x="706.8" y="829.4" width="172.6" height="72" fill="#1f1c38"/><rect x="706.8" y="829.4" width="172.6" height="72" fill="url(#hl)"/><rect x="775" y="835" width="98" height="14" fill="#1b1a36"/><rect x="712" y="848.6" width="160.6" height="36.4" fill="#e6a6b8"/><rect x="715.5" y="833" width="57" height="55.8" fill="#f4efa6" stroke="#8a2a8a" stroke-width="0.8"/><text x="720" y="882.8" font-size="56" fill="#8a5680" stroke="#e3a0b6" stroke-width="3.2" style="font-weight:700;paint-order:stroke" textLength="48.5" lengthAdjust="spacingAndGlyphs">Ki</text><text x="775" y="884.5" font-size="58" fill="#e070c0" stroke="#e070c0" stroke-width="6" stroke-linejoin="round" style="font-weight:700" textLength="91" lengthAdjust="spacingAndGlyphs">Cad</text><text x="775" y="884.5" font-size="58" fill="#f4efa6" stroke="#f4efa6" stroke-width="3.2" stroke-linejoin="round" style="font-weight:700" textLength="91" lengthAdjust="spacingAndGlyphs">Cad</text><circle cx="762.5" cy="835.6" r="5.6" fill="#f4efa6" stroke="#6a3a6a" stroke-width="1"/><path d="M760 838.5 L765.5 833" stroke="#8a6a6a" stroke-width="0.8"/><text x="715.5" y="901.6" font-size="12" fill="#f2dc78" stroke="#8a208a" stroke-width="1.8" style="font-weight:700;paint-order:stroke" textLength="151.5" lengthAdjust="spacingAndGlyphs">DESIGNED WITH</text><circle cx="327.6" cy="211.2" r="36.3" fill="none" stroke="#e13fd6" stroke-width="0.8" opacity=".85"/><circle cx="327.6" cy="211.2" r="35.2" fill="none" stroke="#9a7ad0" stroke-width="0.8"/><circle cx="327.6" cy="211.2" r="34.2" fill="#d63a3a"/><circle cx="327.6" cy="211.2" r="16.3" fill="#001023" stroke="#d8a030" stroke-width="0.6"/><path d="M324.1 211.2H331.1M327.6 207.7V214.7" stroke="#e13fd6" stroke-width="0.9"/><text x="327.6" y="205.89999999999998" text-anchor="middle" font-size="29.5" fill="#e9dcdc" style="font-family:'DejaVu Sans Condensed','DejaVu Sans',sans-serif;font-weight:200">1</text><text x="327.6" y="237.5" text-anchor="middle" font-size="20.5" fill="#f3d2cc" textLength="34" lengthAdjust="spacingAndGlyphs" style="font-family:'DejaVu Sans Condensed','DejaVu Sans',sans-serif;font-weight:200">GND</text><circle cx="988.6" cy="211.2" r="36.3" fill="none" stroke="#e13fd6" stroke-width="0.8" opacity=".85"/><circle cx="988.6" cy="211.2" r="35.2" fill="none" stroke="#9a7ad0" stroke-width="0.8"/><circle cx="988.6" cy="211.2" r="34.2" fill="#d63a3a"/><circle cx="988.6" cy="211.2" r="16.3" fill="#001023" stroke="#d8a030" stroke-width="0.6"/><path d="M985.1 211.2H992.1M988.6 207.7V214.7" stroke="#e13fd6" stroke-width="0.9"/><text x="988.6" y="205.89999999999998" text-anchor="middle" font-size="29.5" fill="#e9dcdc" style="font-family:'DejaVu Sans Condensed','DejaVu Sans',sans-serif;font-weight:200">1</text><text x="988.6" y="237.5" text-anchor="middle" font-size="20.5" fill="#f3d2cc" textLength="34" lengthAdjust="spacingAndGlyphs" style="font-family:'DejaVu Sans Condensed','DejaVu Sans',sans-serif;font-weight:200">GND</text><circle cx="327.6" cy="908" r="36.3" fill="none" stroke="#e13fd6" stroke-width="0.8" opacity=".85"/><circle cx="327.6" cy="908" r="35.2" fill="none" stroke="#9a7ad0" stroke-width="0.8"/><circle cx="327.6" cy="908" r="34.2" fill="#d63a3a"/><circle cx="327.6" cy="908" r="16.3" fill="#001023" stroke="#d8a030" stroke-width="0.6"/><path d="M324.1 908H331.1M327.6 904.5V911.5" stroke="#e13fd6" stroke-width="0.9"/><text x="327.6" y="902.7" text-anchor="middle" font-size="29.5" fill="#e9dcdc" style="font-family:'DejaVu Sans Condensed','DejaVu Sans',sans-serif;font-weight:200">1</text><text x="327.6" y="934.3" text-anchor="middle" font-size="20.5" fill="#f3d2cc" textLength="34" lengthAdjust="spacingAndGlyphs" style="font-family:'DejaVu Sans Condensed','DejaVu Sans',sans-serif;font-weight:200">GND</text><circle cx="988.6" cy="908" r="36.3" fill="none" stroke="#e13fd6" stroke-width="0.8" opacity=".85"/><circle cx="988.6" cy="908" r="35.2" fill="none" stroke="#9a7ad0" stroke-width="0.8"/><circle cx="988.6" cy="908" r="34.2" fill="#d63a3a"/><circle cx="988.6" cy="908" r="16.3" fill="#001023" stroke="#d8a030" stroke-width="0.6"/><path d="M985.1 908H992.1M988.6 904.5V911.5" stroke="#e13fd6" stroke-width="0.9"/><text x="988.6" y="902.7" text-anchor="middle" font-size="29.5" fill="#e9dcdc" style="font-family:'DejaVu Sans Condensed','DejaVu Sans',sans-serif;font-weight:200">1</text><text x="988.6" y="934.3" text-anchor="middle" font-size="20.5" fill="#f3d2cc" textLength="34" lengthAdjust="spacingAndGlyphs" style="font-family:'DejaVu Sans Condensed','DejaVu Sans',sans-serif;font-weight:200">GND</text><circle cx="327.6" cy="908" r="11.5" fill="none" stroke="#c8c8d0" stroke-width="0.7"/><path d="M319.5 899.9 L335.7 916.1 M335.7 899.9 L319.5 916.1" stroke="#c8c8d0" stroke-width="0.7"/><path d="M316 908 H339 M327.6 897 V920" stroke="#d04040" stroke-width="0.7"/><path d="M591.5 157 V184" stroke="#8a909a" stroke-width="0.9"/></g></svg>
<svg class="a" style="left:0;top:0" width="1536" height="1020" viewBox="0 0 1536 1020"><defs><clipPath id="lc"><rect x="1190" y="158" width="88" height="803"/></clipPath></defs><g clip-path="url(#lc)"><path d="M1200 157 V939" stroke="#c3c8d0" stroke-width="1"/><path d="M1200 202.3 H1280" stroke="#c3c8d0" stroke-width="1"/><path d="M1200 245.6 H1280" stroke="#c3c8d0" stroke-width="1"/><path d="M1200 289.0 H1280" stroke="#c3c8d0" stroke-width="1"/><path d="M1200 332.3 H1280" stroke="#c3c8d0" stroke-width="1"/><path d="M1200 375.6 H1280" stroke="#c3c8d0" stroke-width="1"/><path d="M1200 418.9 H1280" stroke="#c3c8d0" stroke-width="1"/><path d="M1200 462.3 H1280" stroke="#c3c8d0" stroke-width="1"/><path d="M1200 505.6 H1280" stroke="#c3c8d0" stroke-width="1"/><path d="M1200 548.9 H1280" stroke="#c3c8d0" stroke-width="1"/><path d="M1200 592.3 H1280" stroke="#c3c8d0" stroke-width="1"/><path d="M1200 635.6 H1280" stroke="#c3c8d0" stroke-width="1"/><path d="M1200 678.9 H1280" stroke="#c3c8d0" stroke-width="1"/><path d="M1200 722.3 H1280" stroke="#c3c8d0" stroke-width="1"/><path d="M1200 765.6 H1280" stroke="#c3c8d0" stroke-width="1"/><path d="M1200 808.9 H1280" stroke="#c3c8d0" stroke-width="1"/><path d="M1200 852.2 H1280" stroke="#c3c8d0" stroke-width="1"/><path d="M1200 895.6 H1280" stroke="#c3c8d0" stroke-width="1"/><path d="M1200 938.9 H1280" stroke="#c3c8d0" stroke-width="1"/><text x="1212.5" y="180" font-size="24.5" fill="#d6d9de" textLength="86" lengthAdjust="spacingAndGlyphs" style="font-family:'DejaVu Sans Mono',monospace;font-weight:700">Layers</text><text transform="translate(1211 231.2) scale(0.93 1)" font-size="26.5" fill="#c9ced6" stroke="#c9ced6" stroke-width="0.45" letter-spacing="1" style="font-family:'DejaVu Sans Light','DejaVu Sans',sans-serif;font-weight:200">F.Silk</text><text transform="translate(1211 274.5) scale(0.93 1)" font-size="26.5" fill="#c9ced6" stroke="#c9ced6" stroke-width="0.45" letter-spacing="1" style="font-family:'DejaVu Sans Light','DejaVu Sans',sans-serif;font-weight:200">F.Pas</text><text transform="translate(1211 317.9) scale(0.93 1)" font-size="26.5" fill="#c9ced6" stroke="#c9ced6" stroke-width="0.45" letter-spacing="1" style="font-family:'DejaVu Sans Light','DejaVu Sans',sans-serif;font-weight:200">F.Mas</text><text transform="translate(1211 361.2) scale(0.93 1)" font-size="26.5" fill="#c9ced6" stroke="#c9ced6" stroke-width="0.45" letter-spacing="1" style="font-family:'DejaVu Sans Light','DejaVu Sans',sans-serif;font-weight:200">F.Cu</text><text transform="translate(1211 404.5) scale(0.93 1)" font-size="26.5" fill="#c9ced6" stroke="#c9ced6" stroke-width="0.45" letter-spacing="1" style="font-family:'DejaVu Sans Light','DejaVu Sans',sans-serif;font-weight:200">Diele</text><text transform="translate(1211 447.8) scale(0.93 1)" font-size="26.5" fill="#c9ced6" stroke="#c9ced6" stroke-width="0.45" letter-spacing="1" style="font-family:'DejaVu Sans Light','DejaVu Sans',sans-serif;font-weight:200">In1.C</text><text transform="translate(1211 491.2) scale(0.93 1)" font-size="26.5" fill="#c9ced6" stroke="#c9ced6" stroke-width="0.45" letter-spacing="1" style="font-family:'DejaVu Sans Light','DejaVu Sans',sans-serif;font-weight:200">Diele</text><text transform="translate(1211 534.5) scale(0.93 1)" font-size="26.5" fill="#c9ced6" stroke="#c9ced6" stroke-width="0.45" letter-spacing="1" style="font-family:'DejaVu Sans Light','DejaVu Sans',sans-serif;font-weight:200">In2.C</text><text transform="translate(1211 577.8) scale(0.93 1)" font-size="26.5" fill="#c9ced6" stroke="#c9ced6" stroke-width="0.45" letter-spacing="1" style="font-family:'DejaVu Sans Light','DejaVu Sans',sans-serif;font-weight:200">Diele</text><text transform="translate(1211 621.2) scale(0.93 1)" font-size="26.5" fill="#c9ced6" stroke="#c9ced6" stroke-width="0.45" letter-spacing="1" style="font-family:'DejaVu Sans Light','DejaVu Sans',sans-serif;font-weight:200">In3.C</text><text transform="translate(1211 664.5) scale(0.93 1)" font-size="26.5" fill="#c9ced6" stroke="#c9ced6" stroke-width="0.45" letter-spacing="1" style="font-family:'DejaVu Sans Light','DejaVu Sans',sans-serif;font-weight:200">Diele</text><text transform="translate(1211 707.8) scale(0.93 1)" font-size="26.5" fill="#c9ced6" stroke="#c9ced6" stroke-width="0.45" letter-spacing="1" style="font-family:'DejaVu Sans Light','DejaVu Sans',sans-serif;font-weight:200">In4.C</text><text transform="translate(1211 751.2) scale(0.93 1)" font-size="26.5" fill="#c9ced6" stroke="#c9ced6" stroke-width="0.45" letter-spacing="1" style="font-family:'DejaVu Sans Light','DejaVu Sans',sans-serif;font-weight:200">Diele</text><text transform="translate(1211 794.5) scale(0.93 1)" font-size="26.5" fill="#c9ced6" stroke="#c9ced6" stroke-width="0.45" letter-spacing="1" style="font-family:'DejaVu Sans Light','DejaVu Sans',sans-serif;font-weight:200">B.Cu</text><text transform="translate(1211 837.8) scale(0.93 1)" font-size="26.5" fill="#c9ced6" stroke="#c9ced6" stroke-width="0.45" letter-spacing="1" style="font-family:'DejaVu Sans Light','DejaVu Sans',sans-serif;font-weight:200">B.Mas</text><text transform="translate(1211 881.1) scale(0.93 1)" font-size="26.5" fill="#c9ced6" stroke="#c9ced6" stroke-width="0.45" letter-spacing="1" style="font-family:'DejaVu Sans Light','DejaVu Sans',sans-serif;font-weight:200">B.Pas</text><text transform="translate(1211 924.5) scale(0.93 1)" font-size="26.5" fill="#c9ced6" stroke="#c9ced6" stroke-width="0.45" letter-spacing="1" style="font-family:'DejaVu Sans Light','DejaVu Sans',sans-serif;font-weight:200">B.Silk</text></g></svg>
<svg class="a" style="left:8.5px;top:7px;" width="17" height="17" viewBox="1 1 22 22"><rect x="2" y="2" width="20" height="20" rx="3.5" fill="#2c9a3a"/><path d="M5 22 C5 12 9 10 9 2 M9.5 22 C9.5 14 13 11 13 2 M14 22 C14 17 17 14 22 13" fill="none" stroke="#1f7a2a" stroke-width="1.6"/><circle cx="6" cy="13" r="1.5" fill="#e8e060"/><circle cx="17" cy="7" r="1.5" fill="#e8e060"/></svg>
<svg class="a" style="left:10.55px;top:57.25px;" width="24.5" height="24.5" viewBox="0 0 24 24"><path d="M2 2 H17.5 L22 6.5 V22 H2Z" fill="#4d4d4d"/><rect x="6.5" y="2" width="9" height="7" fill="#f0f0f0"/><rect x="12" y="3.2" width="2.2" height="4.4" fill="#4d4d4d"/><rect x="5" y="12.5" width="14" height="9.5" fill="#f0f0f0"/></svg>
<svg class="a" style="left:52.75px;top:57.25px;" width="24.5" height="24.5" viewBox="0 0 24 24"><rect x="2" y="2" width="20" height="20" rx="3.5" fill="#2c9a3a"/><path d="M5 22 C5 12 9 10 9 2 M9.5 22 C9.5 14 13 11 13 2 M14 22 C14 17 17 14 22 13" fill="none" stroke="#1f7a2a" stroke-width="1.6"/><circle cx="6" cy="13" r="1.5" fill="#e8e060"/><circle cx="17" cy="7" r="1.5" fill="#e8e060"/><circle cx="16" cy="16" r="5.2" fill="#c8283c"/><g stroke="#c8283c" stroke-width="2.6"><path d="M16 9 V23 M9 16 H23 M11 11 L21 21 M21 11 L11 21"/></g><circle cx="16" cy="16" r="2.4" fill="#f0f0f0"/></svg>
<svg class="a" style="left:93.75px;top:57.25px;" width="24.5" height="24.5" viewBox="0 0 24 24"><path d="M6 2 H16 L20.5 6.5 V19 H6Z" fill="#fafafa" stroke="#4d4d4d" stroke-width="1.2"/><path d="M16 2 V6.5 H20.5Z" fill="#4d4d4d"/><path d="M3.2 2 V19 M6 22 H20.5 M6 20.8 V23.2 M20.5 20.8 V23.2 M2 2 H4.4 M2 19 H4.4" stroke="#4d4d4d" stroke-width="1"/></svg>
<svg class="a" style="left:128.55px;top:57.25px;" width="24.5" height="24.5" viewBox="0 0 24 24"><rect x="6" y="2" width="12" height="6" fill="#fafafa" stroke="#4d4d4d" stroke-width="1.2"/><rect x="1" y="7" width="22" height="10.5" rx="2.5" fill="#4d4d4d"/><path d="M6 13 H18 V22 H9 L6 19Z" fill="#fafafa" stroke="#4d4d4d" stroke-width="1.2"/></svg>
<svg class="a" style="left:162.75px;top:57.25px;" width="24.5" height="24.5" viewBox="0 0 24 24"><rect x="7" y="2" width="10" height="5" fill="#fafafa" stroke="#4d4d4d" stroke-width="1.1"/><rect x="1" y="6.5" width="22" height="6" rx="1" fill="#4d4d4d"/><path d="M7 12 H17 V19 H10 L7 16.5Z" fill="#fafafa" stroke="#4d4d4d" stroke-width="1.1"/><path d="M4 12.5 V22 M20 12.5 V22 M2 22 H6 M18 22 H22 M4 18.5 H7 M17 18.5 H20" stroke="#4d4d4d" stroke-width="1.2"/></svg>
<svg class="a" style="left:203.75px;top:57.25px;" width="24.5" height="24.5" viewBox="0 0 24 24"><path d="M6 8.5 A8 8 0 1 1 10 21.5" fill="none" stroke="#b8b8b8" stroke-width="1.6"/><path d="M5.5 3 V9 H11.5" fill="none" stroke="#b8b8b8" stroke-width="1.6"/></svg>
<svg class="a" style="left:238.75px;top:57.25px;" width="24.5" height="24.5" viewBox="0 0 24 24"><path d="M18 8.5 A8 8 0 1 0 14 21.5" fill="none" stroke="#b8b8b8" stroke-width="1.6"/><path d="M18.5 3 V9 H12.5" fill="none" stroke="#b8b8b8" stroke-width="1.6"/></svg>
<svg class="a" style="left:280.75px;top:57.25px;" width="24.5" height="24.5" viewBox="0 0 24 24"><circle cx="14" cy="9.5" r="7.3" fill="none" stroke="#4d4d4d" stroke-width="1.6"/><path d="M8.8 14.8 L2 21.5" stroke="#4d4d4d" stroke-width="2" stroke-linecap="round"/><text x="14" y="13.5" text-anchor="middle" font-size="11" style="font-weight:700" fill="#4d4d4d">A</text></svg>
<svg class="a" style="left:322.25px;top:57.25px;" width="24.5" height="24.5" viewBox="0 0 24 24"><path d="M3.5 10 A9 9 0 0 1 20 7.5 M20.5 14 A9 9 0 0 1 4 16.5" fill="none" stroke="#4d4d4d" stroke-width="1.8"/><path d="M21 2.5 V8.5 H15 M3 21.5 V15.5 H9" fill="none" stroke="#4d4d4d" stroke-width="1.8"/></svg>
<svg class="a" style="left:356.25px;top:57.25px;" width="24.5" height="24.5" viewBox="0 0 24 24"><circle cx="10" cy="10" r="7" fill="none" stroke="#4d4d4d" stroke-width="1.7"/><path d="M15.2 15.2 L22 22" stroke="#4d4d4d" stroke-width="2" stroke-linecap="round"/><path d="M6 10 H14 M10 6 V14" stroke="#4d4d4d" stroke-width="1.7"/></svg>
<svg class="a" style="left:390.25px;top:57.25px;" width="24.5" height="24.5" viewBox="0 0 24 24"><circle cx="10" cy="10" r="7" fill="none" stroke="#4d4d4d" stroke-width="1.7"/><path d="M15.2 15.2 L22 22" stroke="#4d4d4d" stroke-width="2" stroke-linecap="round"/><path d="M6 10 H14" stroke="#4d4d4d" stroke-width="1.7"/></svg>
<svg class="a" style="left:424.25px;top:57.25px;" width="24.5" height="24.5" viewBox="0 0 24 24"><circle cx="10" cy="10" r="7" fill="none" stroke="#4d4d4d" stroke-width="1.7"/><path d="M15.2 15.2 L22 22" stroke="#4d4d4d" stroke-width="2" stroke-linecap="round"/><path d="M6.5 5.5 H11.5 L13.5 7.5 V14.5 H6.5Z" fill="#8c8c8c"/></svg>
<svg class="a" style="left:458.25px;top:57.25px;" width="24.5" height="24.5" viewBox="0 0 24 24"><circle cx="10" cy="10" r="7" fill="none" stroke="#4d4d4d" stroke-width="1.7"/><path d="M15.2 15.2 L22 22" stroke="#4d4d4d" stroke-width="2" stroke-linecap="round"/><path d="M5 13 L8.5 8.5 L10.5 11 L12 9.5 L15 13Z" fill="#8c8c8c"/><circle cx="12.8" cy="6.8" r="1.2" fill="#8c8c8c"/></svg>
<svg class="a" style="left:492.25px;top:57.25px;" width="24.5" height="24.5" viewBox="0 0 24 24"><circle cx="10" cy="10" r="7" fill="none" stroke="#4d4d4d" stroke-width="1.7"/><path d="M15.2 15.2 L22 22" stroke="#4d4d4d" stroke-width="2" stroke-linecap="round"/><path d="M7.5 4.5 L13.5 10 L10.8 10.3 L12.3 13.6 L10.8 14.3 L9.3 11 L7.5 12.8Z" fill="#8c8c8c"/></svg>
<svg class="a" style="left:533.75px;top:57.25px;" width="24.5" height="24.5" viewBox="0 0 24 24"><path d="M2 22 H22 L2 13Z" fill="#8c8c8c"/><path d="M16 12 C17 7 14 4.5 9.5 5" fill="none" stroke="#1a81c4" stroke-width="1.9"/><path d="M12.5 1.5 L8 5.2 L12.5 8.8" fill="none" stroke="#1a81c4" stroke-width="1.9"/></svg>
<svg class="a" style="left:567.75px;top:57.25px;" width="24.5" height="24.5" viewBox="0 0 24 24"><path d="M2 22 H22 V13Z" fill="#8c8c8c"/><path d="M8 12 C7 7 10 4.5 14.5 5" fill="none" stroke="#1a81c4" stroke-width="1.9"/><path d="M11.5 1.5 L16 5.2 L11.5 8.8" fill="none" stroke="#1a81c4" stroke-width="1.9"/></svg>
<svg class="a" style="left:601.25px;top:57.25px;" width="24.5" height="24.5" viewBox="0 0 24 24"><path d="M2 2 L22 10.5 H2Z" fill="#8c8c8c"/><path d="M2 22 L22 13 H2Z" fill="#1a81c4"/></svg>
<svg class="a" style="left:635.25px;top:57.25px;" width="24.5" height="24.5" viewBox="0 0 24 24"><path d="M11 2 V22 H2Z" fill="#8c8c8c"/><path d="M13 2 V22 H22Z" fill="#1a81c4"/></svg>
<svg class="a" style="left:669.25px;top:57.25px;" width="24.5" height="24.5" viewBox="0 0 24 24"><rect x="3" y="3" width="18" height="18" fill="none" stroke="#b8b8b8" stroke-width="1" stroke-dasharray="2 1.5"/><rect x="5" y="5" width="9" height="9" fill="none" stroke="#b8b8b8" stroke-width="1.5"/><rect x="10" y="10" width="9" height="9" fill="#fafafa" stroke="#b8b8b8" stroke-width="1.5"/><g fill="#b8b8b8"><rect x="1" y="1" width="3.5" height="3.5"/><rect x="19.5" y="1" width="3.5" height="3.5"/><rect x="1" y="19.5" width="3.5" height="3.5"/><rect x="19.5" y="19.5" width="3.5" height="3.5"/></g></svg>
<svg class="a" style="left:703.25px;top:57.25px;" width="24.5" height="24.5" viewBox="0 0 24 24"><rect x="4" y="4" width="10" height="10" fill="none" stroke="#b8b8b8" stroke-width="1.5"/><rect x="10" y="10" width="10" height="10" fill="#fafafa" stroke="#b8b8b8" stroke-width="1.5"/><g fill="#b8b8b8"><rect x="2.5" y="2.5" width="3" height="3"/><rect x="12.5" y="2.5" width="3" height="3"/><rect x="2.5" y="12.5" width="3" height="3"/></g></svg>
<svg class="a" style="left:736.75px;top:57.25px;" width="24.5" height="24.5" viewBox="0 0 24 24"><path d="M7.5 11 V7.5 A4.5 4.5 0 0 1 16.5 7.5 V11" fill="none" stroke="#b8b8b8" stroke-width="2"/><rect x="3.5" y="10.5" width="17" height="12" rx="1" fill="#b8b8b8"/><circle cx="12" cy="15.5" r="1.6" fill="#f0f0f0"/><rect x="11.2" y="15.5" width="1.6" height="4" fill="#f0f0f0"/></svg>
<svg class="a" style="left:769.75px;top:57.25px;" width="24.5" height="24.5" viewBox="0 0 24 24"><path d="M12 11 V6.5 A4.5 4.5 0 0 1 21 6.5 V9" fill="none" stroke="#b8b8b8" stroke-width="2"/><rect x="1.5" y="10.5" width="16" height="12" rx="1" fill="#b8b8b8"/><circle cx="9.5" cy="15.5" r="1.6" fill="#f0f0f0"/><rect x="8.7" y="15.5" width="1.6" height="4" fill="#f0f0f0"/></svg>
<svg class="a" style="left:812.75px;top:57.25px;" width="24.5" height="24.5" viewBox="0 0 24 24"><path d="M4 4.5 H20 V19.5 H4 V14.5 A2.5 2.5 0 0 0 4 9.5Z" fill="#fafafa" stroke="#4d4d4d" stroke-width="1.2"/><g fill="#1a81c4"><rect x="4.5" y="1.5" width="4" height="5"/><rect x="10" y="1.5" width="4" height="5"/><rect x="15.5" y="1.5" width="4" height="5"/><rect x="4.5" y="17.5" width="4" height="5"/></g><circle cx="16.5" cy="16.5" r="6.5" fill="#c8283c"/><path d="M13.5 19.5 L14 17 L18.5 12.5 L20.5 14.5 L16 19Z" fill="#fff"/></svg>
<svg class="a" style="left:846.75px;top:57.25px;" width="24.5" height="24.5" viewBox="0 0 24 24"><rect x="2" y="3" width="5" height="19" fill="#4d4d4d"/><rect x="8" y="3" width="5" height="19" fill="#4d4d4d"/><path d="M14.5 4 L18.5 3 L22.5 20 L18.5 21Z" fill="#3a8fd0"/><path d="M3 7 H6 M9 7 H12 M3 18 H6 M9 18 H12" stroke="#aaa" stroke-width="1"/><circle cx="15.5" cy="15" r="4.3" fill="#f6f6f6" stroke="#c8283c" stroke-width="1.8"/><path d="M18.7 18.2 L22.5 22" stroke="#c8283c" stroke-width="2.2" stroke-linecap="round"/></svg>
<svg class="a" style="left:880.25px;top:57.25px;" width="24.5" height="24.5" viewBox="0 0 24 24"><path d="M5 2 H19 V16 H5Z" fill="#3a3a3a"/><path d="M5 16 L3 19 H21 L19 16Z" fill="#5a5a5a"/><rect x="2" y="20" width="20" height="2.6" fill="#1a81c4"/></svg>
<svg class="a" style="left:922.75px;top:57.25px;" width="24.5" height="24.5" viewBox="0 0 24 24"><rect x="1" y="1" width="22" height="22" rx="3.5" fill="#d8ceb8"/><path d="M13 23 L23 4 V19.5 A3.5 3.5 0 0 1 19.5 23Z" fill="#2c9a3a"/><path d="M14.5 1 L22 1 L12 23 H10.5Z" fill="#2a2a2a" opacity=".0"/><path d="M19 2 L9.5 22" stroke="#fafafa" stroke-width="1.8"/><path d="M5 3 H11 M8 3 V10 M4 10 H12" stroke="#2a2a2a" stroke-width="1.8"/><circle cx="8" cy="8.5" r="1.8" fill="#2a2a2a"/><path d="M3 15 C3 21 8 21.5 11 19.5" fill="none" stroke="#c8283c" stroke-width="2.8"/><path d="M9 15.5 L12.5 20 L7.5 22.5Z" fill="#c8283c"/><circle cx="20" cy="10" r="1.5" fill="#e8e060"/></svg>
<svg class="a" style="left:956.75px;top:57.25px;" width="24.5" height="24.5" viewBox="0 0 24 24"><g fill="none" stroke="#4d4d4d" stroke-width="1.1"><rect x="2.5" y="2.5" width="4" height="4"/><rect x="2.5" y="9.5" width="4" height="4"/><rect x="2.5" y="16.5" width="4" height="4"/><path d="M9.5 4.5 H18"/></g><circle cx="16.5" cy="16" r="6.5" fill="#c8283c"/><path d="M13 16 L15.7 18.8 L20.2 13.5" fill="none" stroke="#fff" stroke-width="2"/></svg>
<svg class="a" style="left:998.25px;top:57.25px;" width="24.5" height="24.5" viewBox="0 0 24 24"><rect x="0.5" y="0.5" width="23" height="23" rx="3.5" fill="#d8ceb8"/><path d="M12 2 V22 M12 12 H2 M12 7 L20 7 M12 17 L20 21" stroke="#2a2a2a" stroke-width="1.6" fill="none"/><path d="M12 12 L20 8" stroke="#2a2a2a" stroke-width="1.6"/><g fill="#c8283c"><rect x="10.3" y="1" width="3.4" height="4"/><rect x="18" y="6" width="5" height="3.4"/><rect x="10.3" y="19.5" width="3.4" height="4"/></g></svg>
<svg class="a" style="left:1130.75px;top:57.25px;" width="24.5" height="24.5" viewBox="0 0 24 24"><rect x="1.5" y="2" width="21" height="20" rx="2.5" fill="#4d4d4d"/><rect x="1.5" y="6" width="21" height="1" fill="#f0f0f0"/><g fill="#f0f0f0"><circle cx="4.5" cy="4.2" r="0.8"/><circle cx="7" cy="4.2" r="0.8"/><circle cx="9.5" cy="4.2" r="0.8"/></g><path d="M4.5 10.5 L8 13 L4.5 15.5 M9 16.5 H13" fill="none" stroke="#f0f0f0" stroke-width="1.3"/></svg>
<div class="a" style="left:42.2px;top:55px;width:1px;height:29px;background:#c6c6c6;"></div>
<div class="a" style="left:83.9px;top:55px;width:1px;height:29px;background:#c6c6c6;"></div>
<div class="a" style="left:193.5px;top:55px;width:1px;height:29px;background:#c6c6c6;"></div>
<div class="a" style="left:269.9px;top:55px;width:1px;height:29px;background:#c6c6c6;"></div>
<div class="a" style="left:312.0px;top:55px;width:1px;height:29px;background:#c6c6c6;"></div>
<div class="a" style="left:523.0px;top:55px;width:1px;height:29px;background:#c6c6c6;"></div>
<div class="a" style="left:802.5px;top:55px;width:1px;height:29px;background:#c6c6c6;"></div>
<div class="a" style="left:912.0px;top:55px;width:1px;height:29px;background:#c6c6c6;"></div>
<div class="a" style="left:989.0px;top:55px;width:1px;height:29px;background:#c6c6c6;"></div>
<div class="a" style="left:1120.5px;top:55px;width:1px;height:29px;background:#c6c6c6;"></div>
<div class="a" style="left:1029px;top:59px;width:88px;height:23px;background:#fff;border:1px solid #e2e2e2;border-bottom-color:#c4c4c4;border-radius:3px;"></div>
<span class="t" style="top:62.5px;font-size:12px;line-height:16px;color:#000;left:1032.5px;letter-spacing:0.128px;">&lt; Default &gt;</span>
<svg class="a" style="left:1103px;top:67.5px;" width="10" height="6" viewBox="0 0 10 6"><path d="M1 1 L5 5 L9 1" fill="none" stroke="#555" stroke-width="1"/></svg>
<svg class="a" style="left:234px;top:93px;" width="24" height="26" viewBox="0 0 24 26"><path d="M3 3 V17 A4 4 0 0 0 7 21 H17 A4 4 0 0 0 21 17 V3" fill="none" stroke="#4d4d4d" stroke-width="1.6"/><path d="M8.5 9 H15.5 M8.5 12.5 H15.5" stroke="#4d4d4d" stroke-width="1.1"/><circle cx="12" cy="21.5" r="2" fill="#1a81c4"/></svg>
<svg class="a" style="left:651.5px;top:94px;" width="15" height="17" viewBox="0 0 15 17"><path d="M7.5 6.5 L14.5 11 L7.5 16 L0.5 11Z" fill="#a8283c"/><path d="M7.5 0.5 L14.5 6 L7.5 11.5 L0.5 6Z" fill="#2a9fe0"/></svg>
<div class="a" style="left:3px;top:129px;width:32px;height:32px;background:#bfdaf2;border:1px solid #8fbce6;"></div>
<svg class="a" style="left:7px;top:133px;" width="24" height="24" viewBox="0 0 24 24"><circle cx="4.0" cy="4.0" r="1.5" fill="#4d4d4d"/><circle cx="4.0" cy="9.3" r="1.5" fill="#4d4d4d"/><circle cx="4.0" cy="14.7" r="1.5" fill="#4d4d4d"/><circle cx="4.0" cy="20.0" r="1.5" fill="#4d4d4d"/><circle cx="9.3" cy="4.0" r="1.5" fill="#4d4d4d"/><circle cx="9.3" cy="9.3" r="1.5" fill="#4d4d4d"/><circle cx="9.3" cy="14.7" r="1.5" fill="#4d4d4d"/><circle cx="9.3" cy="20.0" r="1.5" fill="#4d4d4d"/><circle cx="14.7" cy="4.0" r="1.5" fill="#4d4d4d"/><circle cx="14.7" cy="9.3" r="1.5" fill="#4d4d4d"/><circle cx="14.7" cy="14.7" r="1.5" fill="#4d4d4d"/><circle cx="14.7" cy="20.0" r="1.5" fill="#4d4d4d"/><circle cx="20.0" cy="4.0" r="1.5" fill="#4d4d4d"/><circle cx="20.0" cy="9.3" r="1.5" fill="#4d4d4d"/><circle cx="20.0" cy="14.7" r="1.5" fill="#4d4d4d"/><circle cx="20.0" cy="20.0" r="1.5" fill="#4d4d4d"/></svg>
<div class="a" style="left:3px;top:163px;width:32px;height:32px;background:#bfdaf2;border:1px solid #8fbce6;"></div>
<svg class="a" style="left:7px;top:167px;" width="24" height="24" viewBox="0 0 24 24"><circle cx="4.0" cy="4.0" r="1.4" fill="#4d4d4d"/><circle cx="4.0" cy="9.3" r="1.4" fill="#4d4d4d"/><circle cx="4.0" cy="14.6" r="1.4" fill="#4d4d4d"/><circle cx="9.3" cy="4.0" r="1.4" fill="#4d4d4d"/><circle cx="9.3" cy="9.3" r="1.4" fill="#4d4d4d"/><circle cx="14.6" cy="4.0" r="1.4" fill="#4d4d4d"/><circle cx="12.3" cy="22.2" r="0.9" fill="#4d4d4d"/><circle cx="15.6" cy="18.9" r="0.9" fill="#4d4d4d"/><circle cx="15.6" cy="22.2" r="0.9" fill="#4d4d4d"/><circle cx="18.9" cy="15.6" r="0.9" fill="#4d4d4d"/><circle cx="18.9" cy="18.9" r="0.9" fill="#4d4d4d"/><circle cx="18.9" cy="22.2" r="0.9" fill="#4d4d4d"/><circle cx="22.2" cy="12.3" r="0.9" fill="#4d4d4d"/><circle cx="22.2" cy="15.6" r="0.9" fill="#4d4d4d"/><circle cx="22.2" cy="18.9" r="0.9" fill="#4d4d4d"/><circle cx="22.2" cy="22.2" r="0.9" fill="#4d4d4d"/><path d="M2 22 L22 2" stroke="#4d4d4d" stroke-width="1.3"/></svg>
<svg class="a" style="left:7px;top:201px;" width="24" height="24" viewBox="0 0 24 24"><path d="M4 2 V20 H22 M4 20 L19 5" fill="none" stroke="#4d4d4d" stroke-width="1.3"/><path d="M2 5 L4 1.5 L6 5 M19 18 L22.5 20 L19 22" fill="none" stroke="#4d4d4d" stroke-width="1.1"/><circle cx="20" cy="4" r="1.8" fill="#c8283c"/><text x="8" y="10" font-size="8" fill="#4d4d4d" style="font-weight:700">r</text><text x="13" y="18.5" font-size="8.5" fill="#4d4d4d" style="font-style:italic">θ</text></svg>
<svg class="a" style="left:7px;top:235px;" width="24" height="24" viewBox="0 0 24 24"><text x="12" y="10" text-anchor="middle" font-size="10.5" fill="#4d4d4d" style="font-weight:700">mm</text><path d="M3 16.5 H21 M6.5 13.5 L3 16.5 L6.5 19.5 M17.5 13.5 L21 16.5 L17.5 19.5" fill="none" stroke="#4d4d4d" stroke-width="1.4"/></svg>
<svg class="a" style="left:29px;top:256px;" width="7" height="7" viewBox="0 0 7 7"><path d="M7 0 V7 H0Z" fill="#111"/></svg>
<svg class="a" style="left:7px;top:271px;" width="24" height="24" viewBox="0 0 24 24"><path d="M8 3 V13 M3 8 H13" stroke="#1a81c4" stroke-width="2.4"/><path d="M10 9 L19 15.5 L15 16 L17.5 20.5 L15.5 21.5 L13 17 L10 19.5Z" fill="#4d4d4d"/></svg>
<svg class="a" style="left:29px;top:292px;" width="7" height="7" viewBox="0 0 7 7"><path d="M7 0 V7 H0Z" fill="#111"/></svg>
<svg class="a" style="left:7px;top:310px;" width="24" height="24" viewBox="0 0 24 24"><path d="M4 2 V20 H22" fill="none" stroke="#4d4d4d" stroke-width="1.6"/><path d="M4 20 L9 8 L14 16 L21 10" fill="none" stroke="#4d4d4d" stroke-width="1.1"/><path d="M2 5 L4 1.5 L6 5 M19 18 L22.5 20 L19 22" fill="none" stroke="#4d4d4d" stroke-width="1.1"/></svg>
<svg class="a" style="left:29px;top:331px;" width="7" height="7" viewBox="0 0 7 7"><path d="M7 0 V7 H0Z" fill="#111"/></svg>
<div class="a" style="left:3px;top:348px;width:32px;height:32px;background:#bfdaf2;border:1px solid #8fbce6;"></div>
<svg class="a" style="left:7px;top:352px;" width="24" height="24" viewBox="0 0 24 24"><path d="M5 6 L19 17 M5 18 L18 5 M5 6 L20 11" stroke="#4d4d4d" stroke-width="1"/><g fill="#fafafa" stroke="#4d4d4d" stroke-width="1"><circle cx="5" cy="6" r="2.3"/><circle cx="19" cy="17" r="2.3"/><circle cx="5" cy="18" r="2.3"/><circle cx="18" cy="5" r="2.3"/></g></svg>
<svg class="a" style="left:7px;top:386px;" width="24" height="24" viewBox="0 0 24 24"><path d="M5 14 L14 5 M9 20 Q18 18 19 10 M2 22 L22 2" fill="none" stroke="#4d4d4d" stroke-width="1"/><g fill="#fafafa" stroke="#4d4d4d" stroke-width="1"><circle cx="5" cy="14" r="2"/><circle cx="14" cy="5" r="2"/><circle cx="9" cy="20" r="2"/><circle cx="19" cy="10" r="2"/></g></svg>
<svg class="a" style="left:7px;top:427px;" width="24" height="24" viewBox="0 0 24 24"><path d="M2 4 H7 L12 9 H22 M2 10 H6 L12 16 H22" fill="none" stroke="#c8283c" stroke-width="1.6"/><path d="M2 16 H6 L11 21 H22" fill="none" stroke="#4d4d4d" stroke-width="1.6"/><path d="M3 2 L21 22" stroke="#4d4d4d" stroke-width="1"/><circle cx="10" cy="11" r="2.2" fill="#fafafa" stroke="#f0a020" stroke-width="1.4"/></svg>
<svg class="a" style="left:7px;top:461px;" width="24" height="24" viewBox="0 0 24 24"><path d="M6 20 V12 M11 20 V8 L15 4 M15 20 V10 L19 6 M19 20 V12" fill="none" stroke="#c8c8d0" stroke-width="1.8"/><path d="M6 20 V12" stroke="#e8b0b8" stroke-width="1.8"/><circle cx="6" cy="10" r="2.6" fill="#fafafa" stroke="#f0c878" stroke-width="1.5"/></svg>
<div class="a" style="left:3px;top:500px;width:32px;height:32px;background:#bfdaf2;border:1px solid #8fbce6;"></div>
<svg class="a" style="left:7px;top:504px;" width="24" height="24" viewBox="0 0 24 24"><path d="M9 4 H20 V10 H16.5 A2 2 0 0 0 16.5 14 H20 V20 H3 V12 H9Z" fill="#1a81c4"/><path d="M15 12 H21" stroke="#4d4d4d" stroke-width="1.3"/><circle cx="15.5" cy="12" r="2" fill="#fafafa" stroke="#4d4d4d" stroke-width="1"/></svg>
<svg class="a" style="left:7px;top:538px;" width="24" height="24" viewBox="0 0 24 24"><path d="M9 4 H20 V20 H3 V12 H9Z" fill="none" stroke="#4d4d4d" stroke-width="1.3" stroke-dasharray="2.4 1.8"/><path d="M15 12 H20" stroke="#4d4d4d" stroke-width="1.3"/><circle cx="15" cy="12" r="1.8" fill="#4d4d4d"/></svg>
<svg class="a" style="left:7px;top:580px;" width="24" height="24" viewBox="0 0 24 24"><path d="M3 5 H21 V19 H3 V14.5 A2.5 2.5 0 0 0 3 9.5Z" fill="none" stroke="#4d4d4d" stroke-width="1.2"/><g fill="#1a81c4"><rect x="4.5" y="2" width="3.6" height="5"/><rect x="9.5" y="2" width="3.6" height="5"/><rect x="14.5" y="2" width="3.6" height="5"/></g><g fill="none" stroke="#1a81c4" stroke-width="1"><rect x="4.5" y="17" width="3.6" height="4.5"/><rect x="9.5" y="17" width="3.6" height="4.5"/><rect x="14.5" y="17" width="3.6" height="4.5"/></g><path d="M2 22 L22 2" stroke="#4d4d4d" stroke-width="1.2"/></svg>
<svg class="a" style="left:7px;top:614px;" width="24" height="24" viewBox="0 0 24 24"><path d="M12 4 A8 8 0 1 0 20 12 L12 12Z" fill="#f0a020"/><circle cx="12" cy="12" r="8" fill="none" stroke="#d8d8d8" stroke-width="1"/><circle cx="12" cy="12" r="3.2" fill="#fafafa" stroke="#c8c8c8" stroke-width="1"/><path d="M2 22 L22 2" stroke="#4d4d4d" stroke-width="1.2"/></svg>
<svg class="a" style="left:7px;top:648px;" width="24" height="24" viewBox="0 0 24 24"><path d="M10.5 3 V21" stroke="#c8283c" stroke-width="3.2" stroke-linecap="round"/><path d="M3 13 H14" stroke="#1a81c4" stroke-width="3.2" stroke-linecap="round"/><path d="M14 10 H21 M14 14 H21 M15 14 V21 M18 14 V21" stroke="#b0b0b8" stroke-width="1"/><path d="M2 22 L22 2" stroke="#4d4d4d" stroke-width="1.2"/></svg>
<div class="a" style="left:3px;top:686px;width:32px;height:32px;background:#bfdaf2;border:1px solid #8fbce6;"></div>
<svg class="a" style="left:7px;top:690px;" width="24" height="24" viewBox="0 0 24 24"><path d="M12 12 L21 16.5 L12 21 L3 16.5Z" fill="#f0a020"/><path d="M12 8.5 L21 13 L12 17.5 L3 13Z" fill="#3a3a3a"/><path d="M12 3 L21 8.5 L12 14 L3 8.5Z" fill="#1a81c4"/></svg>
<svg class="a" style="left:7px;top:724px;" width="24" height="24" viewBox="0 0 24 24"><path d="M4 20 L15 9" stroke="#4d4d4d" stroke-width="2.6" stroke-linecap="round"/><path d="M15 9 L20 2.5 L21.5 4 L17 10.5Z" fill="#4d4d4d"/><path d="M5 5 L19 19" stroke="#1a81c4" stroke-width="2.4"/><path d="M2.5 6 A4 4 0 0 0 8 8.5 L6 4 L8.5 2.5 A4 4 0 0 0 2.5 6Z" fill="#1a81c4"/><circle cx="19.5" cy="19.5" r="2.4" fill="#1a81c4"/></svg>
<div class="a" style="left:6px;top:301px;width:27px;height:1px;background:#c4c4c4;"></div>
<div class="a" style="left:6px;top:342px;width:27px;height:1px;background:#c4c4c4;"></div>
<div class="a" style="left:6px;top:417.5px;width:27px;height:1px;background:#c4c4c4;"></div>
<div class="a" style="left:6px;top:494px;width:27px;height:1px;background:#c4c4c4;"></div>
<div class="a" style="left:6px;top:570px;width:27px;height:1px;background:#c4c4c4;"></div>
<div class="a" style="left:6px;top:680px;width:27px;height:1px;background:#c4c4c4;"></div>
<div class="a" style="left:1279.5px;top:129px;width:33px;height:32px;background:#bfdaf2;border:1px solid #8fbce6;"></div>
<svg class="a" style="left:1285.25px;top:133.75px;" width="22.5" height="22.5" viewBox="0 0 24 24"><path d="M7 3 L18 13 L13 13.5 L16 20 L13.5 21 L10.5 14.5 L7 18Z" fill="#4d4d4d"/></svg>
<svg class="a" style="left:1306px;top:154px;" width="7" height="7" viewBox="0 0 7 7"><path d="M7 0 V7 H0Z" fill="#111"/></svg>
<svg class="a" style="left:1285.25px;top:167.75px;" width="22.5" height="22.5" viewBox="0 0 24 24"><path d="M1 1 L23 23 M23 1 L1 23" stroke="#4d4d4d" stroke-width="1.1"/><circle cx="12" cy="12" r="2.4" fill="#fafafa" stroke="#4d4d4d" stroke-width="1"/></svg>
<svg class="a" style="left:1285.25px;top:208.75px;" width="22.5" height="22.5" viewBox="0 0 24 24"><path d="M3 5 H21 V19 H3 V14.5 A2.5 2.5 0 0 0 3 9.5Z" fill="#fafafa" stroke="#4d4d4d" stroke-width="1.2"/><g fill="#1a81c4"><rect x="4" y="2" width="4" height="5.5"/><rect x="10" y="2" width="4" height="5.5"/><rect x="16" y="2" width="4" height="5.5"/><rect x="4" y="16.5" width="4" height="5.5"/><rect x="10" y="16.5" width="4" height="5.5"/><rect x="16" y="16.5" width="4" height="5.5"/></g></svg>
<svg class="a" style="left:1285.25px;top:242.75px;" width="22.5" height="22.5" viewBox="0 0 24 24"><path d="M3 20 L9 10 H16 L21 3" fill="none" stroke="#1a81c4" stroke-width="1.9"/></svg>
<svg class="a" style="left:1306px;top:263px;" width="7" height="7" viewBox="0 0 7 7"><path d="M7 0 V7 H0Z" fill="#111"/></svg>
<svg class="a" style="left:1285.25px;top:276.75px;" width="22.5" height="22.5" viewBox="0 0 24 24"><path d="M2 14 C2 19 6 19 6 14 V10 C6 5 10 5 10 10 V14 C10 19 14 19 14 14 V10 C14 5 18 5 18 10 V14 C18 17 20 17 22 15" fill="none" stroke="#1a81c4" stroke-width="1.9"/></svg>
<svg class="a" style="left:1306px;top:297px;" width="7" height="7" viewBox="0 0 7 7"><path d="M7 0 V7 H0Z" fill="#111"/></svg>
<svg class="a" style="left:1285.25px;top:310.75px;" width="22.5" height="22.5" viewBox="0 0 24 24"><circle cx="12" cy="12" r="5" fill="#fafafa" stroke="#f0a020" stroke-width="4"/></svg>
<svg class="a" style="left:1285.25px;top:344.75px;" width="22.5" height="22.5" viewBox="0 0 24 24"><path d="M9 4 H20 V10 H16.5 A2 2 0 0 0 16.5 14 H20 V20 H3 V12 H9Z" fill="#1a81c4"/><path d="M15 12 H21" stroke="#4d4d4d" stroke-width="1.3"/><circle cx="15.5" cy="12" r="2" fill="#fafafa" stroke="#4d4d4d" stroke-width="1"/></svg>
<svg class="a" style="left:1285.25px;top:378.75px;" width="22.5" height="22.5" viewBox="0 0 24 24"><path d="M9 4 H20 V20 H3 V12 H9Z" fill="#fafafa" stroke="#4d4d4d" stroke-width="1.2"/><path d="M9 10 L15 4 M9 15 L20 4 M5 19 L20 8.5 M4 14.5 L6.5 12 M10 20 L20 12.5 M15 20 L20 16.5" stroke="#4d4d4d" stroke-width="1.6"/></svg>
<svg class="a" style="left:1285.25px;top:419.75px;" width="22.5" height="22.5" viewBox="0 0 24 24"><path d="M3 21 L21 3" stroke="#4d4d4d" stroke-width="1.4"/></svg>
<svg class="a" style="left:1285.25px;top:453.75px;" width="22.5" height="22.5" viewBox="0 0 24 24"><path d="M4 21 C4 10 10 4 21 4" fill="none" stroke="#4d4d4d" stroke-width="1.4"/></svg>
<svg class="a" style="left:1285.25px;top:487.75px;" width="22.5" height="22.5" viewBox="0 0 24 24"><rect x="3" y="5" width="18" height="14" fill="#c4c4c4" stroke="#4d4d4d" stroke-width="1.3"/></svg>
<svg class="a" style="left:1285.25px;top:521.75px;" width="22.5" height="22.5" viewBox="0 0 24 24"><circle cx="12" cy="12" r="8.5" fill="#c4c4c4" stroke="#4d4d4d" stroke-width="1.3"/></svg>
<svg class="a" style="left:1285.25px;top:555.75px;" width="22.5" height="22.5" viewBox="0 0 24 24"><path d="M3 4 L21 8 L17 17 L4 21 L10 12Z" fill="#c4c4c4" stroke="#4d4d4d" stroke-width="1.3"/></svg>
<svg class="a" style="left:1285.25px;top:589.75px;" width="22.5" height="22.5" viewBox="0 0 24 24"><path d="M7 22 C5 14 8 11 12 11 C17 11 18 7 17 3" fill="none" stroke="#4d4d4d" stroke-width="1.3"/><path d="M2 12 H22" stroke="#1a81c4" stroke-width="0.9"/><circle cx="3" cy="12" r="1.4" fill="#1a81c4"/><circle cx="21" cy="12" r="1.4" fill="#1a81c4"/></svg>
<svg class="a" style="left:1285.25px;top:623.75px;" width="22.5" height="22.5" viewBox="0 0 24 24"><rect x="2" y="3" width="20" height="18" rx="2.5" fill="#4d4d4d"/><path d="M4.5 18 L9.5 11 L13 15.5 L15.5 13 L19.5 18Z" fill="#fafafa"/><circle cx="16.5" cy="8" r="1.8" fill="#fafafa"/></svg>
<svg class="a" style="left:1285.25px;top:656.75px;" width="22.5" height="22.5" viewBox="0 0 24 24"><path d="M4 4 H20 V7.5 H14 V21 H10 V7.5 H4Z" fill="#4d4d4d"/></svg>
<svg class="a" style="left:1285.25px;top:690.75px;" width="22.5" height="22.5" viewBox="0 0 24 24"><rect x="3" y="4" width="18" height="16" fill="#c4c4c4" stroke="#4d4d4d" stroke-width="1.3"/><path d="M6 8.5 H18 M6 12 H18 M6 15.5 H14" stroke="#4d4d4d" stroke-width="1.2"/></svg>
<svg class="a" style="left:1285.25px;top:724.75px;" width="22.5" height="22.5" viewBox="0 0 24 24"><rect x="2.5" y="3.5" width="19" height="17" fill="#fafafa" stroke="#4d4d4d" stroke-width="1.2"/><rect x="2.5" y="3.5" width="19" height="4.5" fill="#c4c4c4" stroke="#4d4d4d" stroke-width="1.2"/><path d="M2.5 12 H21.5 M2.5 16.2 H21.5 M9 3.5 V20.5 M15.3 3.5 V20.5" stroke="#4d4d4d" stroke-width="1.1"/></svg>
<svg class="a" style="left:1285.25px;top:758.75px;" width="22.5" height="22.5" viewBox="0 0 24 24"><path d="M4 4 H20 M12 19 H20 M18 6 V17" fill="none" stroke="#4d4d4d" stroke-width="1"/><path d="M16.5 8 L18 5.5 L19.5 8 M16.5 15 L18 17.5 L19.5 15" fill="none" stroke="#4d4d4d" stroke-width="0.9"/><circle cx="4" cy="4" r="2.2" fill="#1a81c4"/><circle cx="12" cy="19" r="2.2" fill="#1a81c4"/></svg>
<svg class="a" style="left:1306px;top:779px;" width="7" height="7" viewBox="0 0 7 7"><path d="M7 0 V7 H0Z" fill="#111"/></svg>
<svg class="a" style="left:1285.25px;top:792.75px;" width="22.5" height="22.5" viewBox="0 0 24 24"><path d="M4 4 V20 M8 4 V20 M11.5 4 V20 M15 4 V20 M18.5 4 V20" stroke="#4d4d4d" stroke-width="1.7"/><path d="M21 4 V20" stroke="#4d4d4d" stroke-width="0.9"/></svg>
<svg class="a" style="left:1285.25px;top:826.75px;" width="22.5" height="22.5" viewBox="0 0 24 24"><path d="M4 2 L14 11.5 L9.5 12 L12 17.5 L9.8 18.5 L7.3 13 L4 16Z" fill="#4d4d4d"/><circle cx="17" cy="17" r="5.5" fill="#c8283c"/><path d="M14.8 14.8 L19.2 19.2 M19.2 14.8 L14.8 19.2" stroke="#fff" stroke-width="1.6"/></svg>
<svg class="a" style="left:1285.25px;top:868.75px;" width="22.5" height="22.5" viewBox="0 0 24 24"><circle cx="4.0" cy="4.0" r="1.3" fill="#4d4d4d"/><circle cx="4.0" cy="9.3" r="1.3" fill="#4d4d4d"/><circle cx="4.0" cy="14.7" r="1.3" fill="#4d4d4d"/><circle cx="4.0" cy="20.0" r="1.3" fill="#4d4d4d"/><circle cx="9.3" cy="4.0" r="1.3" fill="#4d4d4d"/><circle cx="9.3" cy="9.3" r="1.3" fill="#4d4d4d"/><circle cx="9.3" cy="14.7" r="1.3" fill="#4d4d4d"/><circle cx="9.3" cy="20.0" r="1.3" fill="#4d4d4d"/><circle cx="14.7" cy="4.0" r="1.3" fill="#4d4d4d"/><circle cx="14.7" cy="9.3" r="1.3" fill="#4d4d4d"/><circle cx="14.7" cy="14.7" r="1.3" fill="#4d4d4d"/><circle cx="14.7" cy="20.0" r="1.3" fill="#4d4d4d"/><circle cx="20.0" cy="4.0" r="1.3" fill="#4d4d4d"/><circle cx="20.0" cy="9.3" r="1.3" fill="#4d4d4d"/><circle cx="20.0" cy="14.7" r="1.3" fill="#4d4d4d"/><circle cx="20.0" cy="20.0" r="1.3" fill="#4d4d4d"/><path d="M9.3 2 V22 M2 14.7 H22" stroke="#4d4d4d" stroke-width="1"/><path d="M9.3 11 V18.5 M5.5 14.7 H13" stroke="#1a81c4" stroke-width="2.2"/></svg>
<svg class="a" style="left:1306px;top:889px;" width="7" height="7" viewBox="0 0 7 7"><path d="M7 0 V7 H0Z" fill="#111"/></svg>
<svg class="a" style="left:1285.25px;top:902.75px;" width="22.5" height="22.5" viewBox="0 0 24 24"><circle cx="12" cy="12" r="6.5" fill="none" stroke="#1a81c4" stroke-width="1.8"/><path d="M3 3 L21 21 M21 3 L3 21" stroke="#4d4d4d" stroke-width="1.5"/></svg>
<div class="a" style="left:1283px;top:198px;width:27px;height:1px;background:#c4c4c4;"></div>
<div class="a" style="left:1283px;top:409.5px;width:27px;height:1px;background:#c4c4c4;"></div>
<div class="a" style="left:1283px;top:857px;width:27px;height:1px;background:#c4c4c4;"></div>
<span class="t" style="top:938.5px;font-size:14px;line-height:16px;color:#444;left:1291px;">»</span>
<div class="a" style="left:1316px;top:124px;width:220px;height:837px;background:#f0f0f0;"></div>
<div class="a" style="left:1318px;top:124px;width:218px;height:21.5px;background:#b9b9b9;"></div>
<span class="t" style="top:127px;font-size:12px;line-height:16px;color:#000;left:1322px;letter-spacing:0.011px;">Внешний вид</span>
<div class="a" style="left:1320px;top:150px;width:49px;height:22px;background:#f9f9f9;"></div>
<span class="t" style="top:152.5px;font-size:12px;line-height:16px;color:#000;left:1324px;letter-spacing:-0.062px;">Слои</span>
<span class="t" style="top:153.5px;font-size:12px;line-height:16px;color:#000;left:1373.5px;letter-spacing:0.167px;">Объекты</span>
<span class="t" style="top:153.5px;font-size:12px;line-height:16px;color:#000;left:1433px;letter-spacing:-0.089px;">Цепи</span>
<div class="a" style="left:1320px;top:174px;width:194px;height:515px;background:#f3f3f3;"></div>
<div class="a" style="left:1321px;top:173.5px;width:192px;height:16.5px;background:#e3e3e3;"></div>
<div class="a" style="left:1336px;top:175px;width:14px;height:14px;background:#c83434;"></div>
<svg class="a" style="left:1352.5px;top:175.2px;" width="13" height="13" viewBox="0 0 13 13"><ellipse cx="6.5" cy="6.5" rx="6" ry="5.6" fill="#4a4a4a"/><path d="M1.6 6.5 Q6.5 1.6 11.4 6.5 Q6.5 11.4 1.6 6.5Z" fill="#f0f0f0"/><circle cx="6.5" cy="6.5" r="2.3" fill="#4a4a4a"/><circle cx="6.5" cy="6.5" r="0.9" fill="#f0f0f0"/></svg>
<span class="t" style="top:173.7px;font-size:10.7px;line-height:16px;color:#1e1e1e;left:1368px;letter-spacing:-0.328px;">F.Cu</span>
<div class="a" style="left:1336px;top:191px;width:14px;height:14px;background:#7fc87f;"></div>
<svg class="a" style="left:1352.5px;top:191.75px;" width="13" height="13" viewBox="0 0 13 13"><ellipse cx="6.5" cy="6.5" rx="6" ry="5.6" fill="#4a4a4a"/><path d="M1.6 6.5 Q6.5 1.6 11.4 6.5 Q6.5 11.4 1.6 6.5Z" fill="#f0f0f0"/><circle cx="6.5" cy="6.5" r="2.3" fill="#4a4a4a"/><circle cx="6.5" cy="6.5" r="0.9" fill="#f0f0f0"/></svg>
<span class="t" style="top:190.25px;font-size:10.7px;line-height:16px;color:#1e1e1e;left:1368px;letter-spacing:-0.100px;">In1.Cu</span>
<div class="a" style="left:1336px;top:208px;width:14px;height:14px;background:#ce7d2c;"></div>
<svg class="a" style="left:1352.5px;top:208.29999999999998px;" width="13" height="13" viewBox="0 0 13 13"><ellipse cx="6.5" cy="6.5" rx="6" ry="5.6" fill="#4a4a4a"/><path d="M1.6 6.5 Q6.5 1.6 11.4 6.5 Q6.5 11.4 1.6 6.5Z" fill="#f0f0f0"/><circle cx="6.5" cy="6.5" r="2.3" fill="#4a4a4a"/><circle cx="6.5" cy="6.5" r="0.9" fill="#f0f0f0"/></svg>
<span class="t" style="top:206.8px;font-size:10.7px;line-height:16px;color:#1e1e1e;left:1368px;letter-spacing:-0.100px;">In2.Cu</span>
<div class="a" style="left:1336px;top:224px;width:14px;height:14px;background:#4fcbcb;"></div>
<svg class="a" style="left:1352.5px;top:224.85px;" width="13" height="13" viewBox="0 0 13 13"><ellipse cx="6.5" cy="6.5" rx="6" ry="5.6" fill="#4a4a4a"/><path d="M1.6 6.5 Q6.5 1.6 11.4 6.5 Q6.5 11.4 1.6 6.5Z" fill="#f0f0f0"/><circle cx="6.5" cy="6.5" r="2.3" fill="#4a4a4a"/><circle cx="6.5" cy="6.5" r="0.9" fill="#f0f0f0"/></svg>
<span class="t" style="top:223.35px;font-size:10.7px;line-height:16px;color:#1e1e1e;left:1368px;letter-spacing:-0.100px;">In3.Cu</span>
<div class="a" style="left:1336px;top:241px;width:14px;height:14px;background:#db628b;"></div>
<svg class="a" style="left:1352.5px;top:241.39999999999998px;" width="13" height="13" viewBox="0 0 13 13"><ellipse cx="6.5" cy="6.5" rx="6" ry="5.6" fill="#4a4a4a"/><path d="M1.6 6.5 Q6.5 1.6 11.4 6.5 Q6.5 11.4 1.6 6.5Z" fill="#f0f0f0"/><circle cx="6.5" cy="6.5" r="2.3" fill="#4a4a4a"/><circle cx="6.5" cy="6.5" r="0.9" fill="#f0f0f0"/></svg>
<span class="t" style="top:239.9px;font-size:10.7px;line-height:16px;color:#1e1e1e;left:1368px;letter-spacing:-0.100px;">In4.Cu</span>
<div class="a" style="left:1336px;top:257px;width:14px;height:14px;background:#4d7fc4;"></div>
<svg class="a" style="left:1352.5px;top:257.95px;" width="13" height="13" viewBox="0 0 13 13"><ellipse cx="6.5" cy="6.5" rx="6" ry="5.6" fill="#4a4a4a"/><path d="M1.6 6.5 Q6.5 1.6 11.4 6.5 Q6.5 11.4 1.6 6.5Z" fill="#f0f0f0"/><circle cx="6.5" cy="6.5" r="2.3" fill="#4a4a4a"/><circle cx="6.5" cy="6.5" r="0.9" fill="#f0f0f0"/></svg>
<span class="t" style="top:256.45px;font-size:10.7px;line-height:16px;color:#1e1e1e;left:1368px;letter-spacing:-0.755px;">B.Cu</span>
<div class="a" style="left:1336px;top:274px;width:14px;height:14px;background:#840084;"></div>
<svg class="a" style="left:1352.5px;top:274.5px;" width="13" height="13" viewBox="0 0 13 13"><ellipse cx="6.5" cy="6.5" rx="6" ry="5.6" fill="#4a4a4a"/><path d="M1.6 6.5 Q6.5 1.6 11.4 6.5 Q6.5 11.4 1.6 6.5Z" fill="#f0f0f0"/><circle cx="6.5" cy="6.5" r="2.3" fill="#4a4a4a"/><circle cx="6.5" cy="6.5" r="0.9" fill="#f0f0f0"/></svg>
<span class="t" style="top:273px;font-size:10.7px;line-height:16px;color:#1e1e1e;left:1368px;letter-spacing:-0.087px;">F.Adhesive</span>
<div class="a" style="left:1336px;top:291px;width:14px;height:14px;background:#000084;"></div>
<svg class="a" style="left:1352.5px;top:291.05px;" width="13" height="13" viewBox="0 0 13 13"><ellipse cx="6.5" cy="6.5" rx="6" ry="5.6" fill="#4a4a4a"/><path d="M1.6 6.5 Q6.5 1.6 11.4 6.5 Q6.5 11.4 1.6 6.5Z" fill="#f0f0f0"/><circle cx="6.5" cy="6.5" r="2.3" fill="#4a4a4a"/><circle cx="6.5" cy="6.5" r="0.9" fill="#f0f0f0"/></svg>
<span class="t" style="top:289.55px;font-size:10.7px;line-height:16px;color:#1e1e1e;left:1368px;letter-spacing:-0.231px;">B.Adhesive</span>
<div class="a" style="left:1336px;top:307px;width:14px;height:14px;background:#b4a09a;"></div>
<svg class="a" style="left:1352.5px;top:307.6px;" width="13" height="13" viewBox="0 0 13 13"><ellipse cx="6.5" cy="6.5" rx="6" ry="5.6" fill="#4a4a4a"/><path d="M1.6 6.5 Q6.5 1.6 11.4 6.5 Q6.5 11.4 1.6 6.5Z" fill="#f0f0f0"/><circle cx="6.5" cy="6.5" r="2.3" fill="#4a4a4a"/><circle cx="6.5" cy="6.5" r="0.9" fill="#f0f0f0"/></svg>
<span class="t" style="top:306.1px;font-size:10.7px;line-height:16px;color:#1e1e1e;left:1368px;letter-spacing:-0.443px;">F.Paste</span>
<div class="a" style="left:1336px;top:324px;width:14px;height:14px;background:#00c2c2;"></div>
<svg class="a" style="left:1352.5px;top:324.15px;" width="13" height="13" viewBox="0 0 13 13"><ellipse cx="6.5" cy="6.5" rx="6" ry="5.6" fill="#4a4a4a"/><path d="M1.6 6.5 Q6.5 1.6 11.4 6.5 Q6.5 11.4 1.6 6.5Z" fill="#f0f0f0"/><circle cx="6.5" cy="6.5" r="2.3" fill="#4a4a4a"/><circle cx="6.5" cy="6.5" r="0.9" fill="#f0f0f0"/></svg>
<span class="t" style="top:322.65px;font-size:10.7px;line-height:16px;color:#1e1e1e;left:1368px;letter-spacing:-0.656px;">B.Paste</span>
<div class="a" style="left:1336px;top:340px;width:14px;height:14px;background:#f2eda1;"></div>
<svg class="a" style="left:1352.5px;top:340.7px;" width="13" height="13" viewBox="0 0 13 13"><ellipse cx="6.5" cy="6.5" rx="6" ry="5.6" fill="#4a4a4a"/><path d="M1.6 6.5 Q6.5 1.6 11.4 6.5 Q6.5 11.4 1.6 6.5Z" fill="#f0f0f0"/><circle cx="6.5" cy="6.5" r="2.3" fill="#4a4a4a"/><circle cx="6.5" cy="6.5" r="0.9" fill="#f0f0f0"/></svg>
<span class="t" style="top:339.2px;font-size:10.7px;line-height:16px;color:#1e1e1e;left:1368px;letter-spacing:-0.102px;">F.Silkscreen</span>
<div class="a" style="left:1336px;top:357px;width:14px;height:14px;background:#e8b2a7;"></div>
<svg class="a" style="left:1352.5px;top:357.25px;" width="13" height="13" viewBox="0 0 13 13"><ellipse cx="6.5" cy="6.5" rx="6" ry="5.6" fill="#4a4a4a"/><path d="M1.6 6.5 Q6.5 1.6 11.4 6.5 Q6.5 11.4 1.6 6.5Z" fill="#f0f0f0"/><circle cx="6.5" cy="6.5" r="2.3" fill="#4a4a4a"/><circle cx="6.5" cy="6.5" r="0.9" fill="#f0f0f0"/></svg>
<span class="t" style="top:355.75px;font-size:10.7px;line-height:16px;color:#1e1e1e;left:1368px;letter-spacing:-0.219px;">B.Silkscreen</span>
<div class="a" style="left:1336px;top:373px;width:14px;height:14px;background:#6c2f7e;"></div>
<svg class="a" style="left:1352.5px;top:373.8px;" width="13" height="13" viewBox="0 0 13 13"><ellipse cx="6.5" cy="6.5" rx="6" ry="5.6" fill="#4a4a4a"/><path d="M1.6 6.5 Q6.5 1.6 11.4 6.5 Q6.5 11.4 1.6 6.5Z" fill="#f0f0f0"/><circle cx="6.5" cy="6.5" r="2.3" fill="#4a4a4a"/><circle cx="6.5" cy="6.5" r="0.9" fill="#f0f0f0"/></svg>
<span class="t" style="top:372.3px;font-size:10.7px;line-height:16px;color:#1e1e1e;left:1368px;letter-spacing:-0.072px;">F.Mask</span>
<div class="a" style="left:1336px;top:390px;width:14px;height:14px;background:#02735f;"></div>
<svg class="a" style="left:1352.5px;top:390.35px;" width="13" height="13" viewBox="0 0 13 13"><ellipse cx="6.5" cy="6.5" rx="6" ry="5.6" fill="#4a4a4a"/><path d="M1.6 6.5 Q6.5 1.6 11.4 6.5 Q6.5 11.4 1.6 6.5Z" fill="#f0f0f0"/><circle cx="6.5" cy="6.5" r="2.3" fill="#4a4a4a"/><circle cx="6.5" cy="6.5" r="0.9" fill="#f0f0f0"/></svg>
<span class="t" style="top:388.85px;font-size:10.7px;line-height:16px;color:#1e1e1e;left:1368px;letter-spacing:-0.328px;">B.Mask</span>
<div class="a" style="left:1336px;top:406px;width:14px;height:14px;background:#c2c2c2;"></div>
<svg class="a" style="left:1352.5px;top:406.9px;" width="13" height="13" viewBox="0 0 13 13"><ellipse cx="6.5" cy="6.5" rx="6" ry="5.6" fill="#4a4a4a"/><path d="M1.6 6.5 Q6.5 1.6 11.4 6.5 Q6.5 11.4 1.6 6.5Z" fill="#f0f0f0"/><circle cx="6.5" cy="6.5" r="2.3" fill="#4a4a4a"/><circle cx="6.5" cy="6.5" r="0.9" fill="#f0f0f0"/></svg>
<span class="t" style="top:405.4px;font-size:10.7px;line-height:16px;color:#1e1e1e;left:1368px;letter-spacing:0.042px;">User.Drawings</span>
<div class="a" style="left:1336px;top:423px;width:14px;height:14px;background:#5994dc;"></div>
<svg class="a" style="left:1352.5px;top:423.45px;" width="13" height="13" viewBox="0 0 13 13"><ellipse cx="6.5" cy="6.5" rx="6" ry="5.6" fill="#4a4a4a"/><path d="M1.6 6.5 Q6.5 1.6 11.4 6.5 Q6.5 11.4 1.6 6.5Z" fill="#f0f0f0"/><circle cx="6.5" cy="6.5" r="2.3" fill="#4a4a4a"/><circle cx="6.5" cy="6.5" r="0.9" fill="#f0f0f0"/></svg>
<span class="t" style="top:421.95px;font-size:10.7px;line-height:16px;color:#1e1e1e;left:1368px;letter-spacing:0.031px;">User.Comments</span>
<div class="a" style="left:1336px;top:440px;width:14px;height:14px;background:#b4dbd2;"></div>
<svg class="a" style="left:1352.5px;top:440.0px;" width="13" height="13" viewBox="0 0 13 13"><ellipse cx="6.5" cy="6.5" rx="6" ry="5.6" fill="#4a4a4a"/><path d="M1.6 6.5 Q6.5 1.6 11.4 6.5 Q6.5 11.4 1.6 6.5Z" fill="#f0f0f0"/><circle cx="6.5" cy="6.5" r="2.3" fill="#4a4a4a"/><circle cx="6.5" cy="6.5" r="0.9" fill="#f0f0f0"/></svg>
<span class="t" style="top:438.5px;font-size:10.7px;line-height:16px;color:#1e1e1e;left:1368px;letter-spacing:-0.289px;">User.Eco1</span>
<div class="a" style="left:1336px;top:456px;width:14px;height:14px;background:#d8c852;"></div>
<svg class="a" style="left:1352.5px;top:456.55px;" width="13" height="13" viewBox="0 0 13 13"><ellipse cx="6.5" cy="6.5" rx="6" ry="5.6" fill="#4a4a4a"/><path d="M1.6 6.5 Q6.5 1.6 11.4 6.5 Q6.5 11.4 1.6 6.5Z" fill="#f0f0f0"/><circle cx="6.5" cy="6.5" r="2.3" fill="#4a4a4a"/><circle cx="6.5" cy="6.5" r="0.9" fill="#f0f0f0"/></svg>
<span class="t" style="top:455.05px;font-size:10.7px;line-height:16px;color:#1e1e1e;left:1368px;letter-spacing:-0.289px;">User.Eco2</span>
<div class="a" style="left:1336px;top:473px;width:14px;height:14px;background:#d0d2cd;"></div>
<svg class="a" style="left:1352.5px;top:473.1px;" width="13" height="13" viewBox="0 0 13 13"><ellipse cx="6.5" cy="6.5" rx="6" ry="5.6" fill="#4a4a4a"/><path d="M1.6 6.5 Q6.5 1.6 11.4 6.5 Q6.5 11.4 1.6 6.5Z" fill="#f0f0f0"/><circle cx="6.5" cy="6.5" r="2.3" fill="#4a4a4a"/><circle cx="6.5" cy="6.5" r="0.9" fill="#f0f0f0"/></svg>
<span class="t" style="top:471.6px;font-size:10.7px;line-height:16px;color:#1e1e1e;left:1368px;letter-spacing:-0.363px;">Edge.Cuts</span>
<div class="a" style="left:1336px;top:489px;width:14px;height:14px;background:#ff26e2;"></div>
<svg class="a" style="left:1352.5px;top:489.65px;" width="13" height="13" viewBox="0 0 13 13"><ellipse cx="6.5" cy="6.5" rx="6" ry="5.6" fill="#4a4a4a"/><path d="M1.6 6.5 Q6.5 1.6 11.4 6.5 Q6.5 11.4 1.6 6.5Z" fill="#f0f0f0"/><circle cx="6.5" cy="6.5" r="2.3" fill="#4a4a4a"/><circle cx="6.5" cy="6.5" r="0.9" fill="#f0f0f0"/></svg>
<span class="t" style="top:488.15px;font-size:10.7px;line-height:16px;color:#1e1e1e;left:1368px;letter-spacing:0.366px;">Margin</span>
<div class="a" style="left:1336px;top:506px;width:14px;height:14px;background:#ff26e2;"></div>
<svg class="a" style="left:1352.5px;top:506.20000000000005px;" width="13" height="13" viewBox="0 0 13 13"><ellipse cx="6.5" cy="6.5" rx="6" ry="5.6" fill="#4a4a4a"/><path d="M1.6 6.5 Q6.5 1.6 11.4 6.5 Q6.5 11.4 1.6 6.5Z" fill="#f0f0f0"/><circle cx="6.5" cy="6.5" r="2.3" fill="#4a4a4a"/><circle cx="6.5" cy="6.5" r="0.9" fill="#f0f0f0"/></svg>
<span class="t" style="top:504.7px;font-size:10.7px;line-height:16px;color:#1e1e1e;left:1368px;letter-spacing:0.125px;">F.Courtyard</span>
<div class="a" style="left:1336px;top:522px;width:14px;height:14px;background:#26e9ff;"></div>
<svg class="a" style="left:1352.5px;top:522.75px;" width="13" height="13" viewBox="0 0 13 13"><ellipse cx="6.5" cy="6.5" rx="6" ry="5.6" fill="#4a4a4a"/><path d="M1.6 6.5 Q6.5 1.6 11.4 6.5 Q6.5 11.4 1.6 6.5Z" fill="#f0f0f0"/><circle cx="6.5" cy="6.5" r="2.3" fill="#4a4a4a"/><circle cx="6.5" cy="6.5" r="0.9" fill="#f0f0f0"/></svg>
<span class="t" style="top:521.25px;font-size:10.7px;line-height:16px;color:#1e1e1e;left:1368px;letter-spacing:-0.003px;">B.Courtyard</span>
<div class="a" style="left:1336px;top:539px;width:14px;height:14px;background:#afafaf;"></div>
<svg class="a" style="left:1352.5px;top:539.3px;" width="13" height="13" viewBox="0 0 13 13"><ellipse cx="6.5" cy="6.5" rx="6" ry="5.6" fill="#4a4a4a"/><path d="M1.6 6.5 Q6.5 1.6 11.4 6.5 Q6.5 11.4 1.6 6.5Z" fill="#f0f0f0"/><circle cx="6.5" cy="6.5" r="2.3" fill="#4a4a4a"/><circle cx="6.5" cy="6.5" r="0.9" fill="#f0f0f0"/></svg>
<span class="t" style="top:537.8px;font-size:10.7px;line-height:16px;color:#1e1e1e;left:1368px;letter-spacing:-0.559px;">F.Fab</span>
<div class="a" style="left:1336px;top:555px;width:14px;height:14px;background:#585d84;"></div>
<svg class="a" style="left:1352.5px;top:555.85px;" width="13" height="13" viewBox="0 0 13 13"><ellipse cx="6.5" cy="6.5" rx="6" ry="5.6" fill="#4a4a4a"/><path d="M1.6 6.5 Q6.5 1.6 11.4 6.5 Q6.5 11.4 1.6 6.5Z" fill="#f0f0f0"/><circle cx="6.5" cy="6.5" r="2.3" fill="#4a4a4a"/><circle cx="6.5" cy="6.5" r="0.9" fill="#f0f0f0"/></svg>
<span class="t" style="top:554.35px;font-size:10.7px;line-height:16px;color:#1e1e1e;left:1368px;letter-spacing:-0.879px;">B.Fab</span>
<div class="a" style="left:1336px;top:572px;width:14px;height:14px;background:#c2c2c2;"></div>
<svg class="a" style="left:1352.5px;top:572.4000000000001px;" width="13" height="13" viewBox="0 0 13 13"><ellipse cx="6.5" cy="6.5" rx="6" ry="5.6" fill="#4a4a4a"/><path d="M1.6 6.5 Q6.5 1.6 11.4 6.5 Q6.5 11.4 1.6 6.5Z" fill="#f0f0f0"/><circle cx="6.5" cy="6.5" r="2.3" fill="#4a4a4a"/><circle cx="6.5" cy="6.5" r="0.9" fill="#f0f0f0"/></svg>
<span class="t" style="top:570.9px;font-size:10.7px;line-height:16px;color:#1e1e1e;left:1368px;letter-spacing:-0.178px;">User.1</span>
<div class="a" style="left:1336px;top:588px;width:14px;height:14px;background:#5994dc;"></div>
<svg class="a" style="left:1352.5px;top:588.95px;" width="13" height="13" viewBox="0 0 13 13"><ellipse cx="6.5" cy="6.5" rx="6" ry="5.6" fill="#4a4a4a"/><path d="M1.6 6.5 Q6.5 1.6 11.4 6.5 Q6.5 11.4 1.6 6.5Z" fill="#f0f0f0"/><circle cx="6.5" cy="6.5" r="2.3" fill="#4a4a4a"/><circle cx="6.5" cy="6.5" r="0.9" fill="#f0f0f0"/></svg>
<span class="t" style="top:587.45px;font-size:10.7px;line-height:16px;color:#1e1e1e;left:1368px;letter-spacing:-0.178px;">User.2</span>
<div class="a" style="left:1336px;top:605px;width:14px;height:14px;background:#b4dbd2;"></div>
<svg class="a" style="left:1352.5px;top:605.5px;" width="13" height="13" viewBox="0 0 13 13"><ellipse cx="6.5" cy="6.5" rx="6" ry="5.6" fill="#4a4a4a"/><path d="M1.6 6.5 Q6.5 1.6 11.4 6.5 Q6.5 11.4 1.6 6.5Z" fill="#f0f0f0"/><circle cx="6.5" cy="6.5" r="2.3" fill="#4a4a4a"/><circle cx="6.5" cy="6.5" r="0.9" fill="#f0f0f0"/></svg>
<span class="t" style="top:604px;font-size:10.7px;line-height:16px;color:#1e1e1e;left:1368px;letter-spacing:-0.178px;">User.3</span>
<div class="a" style="left:1336px;top:622px;width:14px;height:14px;background:#d8c852;"></div>
<svg class="a" style="left:1352.5px;top:622.05px;" width="13" height="13" viewBox="0 0 13 13"><ellipse cx="6.5" cy="6.5" rx="6" ry="5.6" fill="#4a4a4a"/><path d="M1.6 6.5 Q6.5 1.6 11.4 6.5 Q6.5 11.4 1.6 6.5Z" fill="#f0f0f0"/><circle cx="6.5" cy="6.5" r="2.3" fill="#4a4a4a"/><circle cx="6.5" cy="6.5" r="0.9" fill="#f0f0f0"/></svg>
<span class="t" style="top:620.55px;font-size:10.7px;line-height:16px;color:#1e1e1e;left:1368px;letter-spacing:-0.178px;">User.4</span>
<div class="a" style="left:1336px;top:638px;width:14px;height:14px;background:#c2c2c2;"></div>
<svg class="a" style="left:1352.5px;top:638.6px;" width="13" height="13" viewBox="0 0 13 13"><ellipse cx="6.5" cy="6.5" rx="6" ry="5.6" fill="#4a4a4a"/><path d="M1.6 6.5 Q6.5 1.6 11.4 6.5 Q6.5 11.4 1.6 6.5Z" fill="#f0f0f0"/><circle cx="6.5" cy="6.5" r="2.3" fill="#4a4a4a"/><circle cx="6.5" cy="6.5" r="0.9" fill="#f0f0f0"/></svg>
<span class="t" style="top:637.1px;font-size:10.7px;line-height:16px;color:#1e1e1e;left:1368px;letter-spacing:-0.178px;">User.5</span>
<div class="a" style="left:1336px;top:655px;width:14px;height:14px;background:#5994dc;"></div>
<svg class="a" style="left:1352.5px;top:655.1500000000001px;" width="13" height="13" viewBox="0 0 13 13"><ellipse cx="6.5" cy="6.5" rx="6" ry="5.6" fill="#4a4a4a"/><path d="M1.6 6.5 Q6.5 1.6 11.4 6.5 Q6.5 11.4 1.6 6.5Z" fill="#f0f0f0"/><circle cx="6.5" cy="6.5" r="2.3" fill="#4a4a4a"/><circle cx="6.5" cy="6.5" r="0.9" fill="#f0f0f0"/></svg>
<span class="t" style="top:653.65px;font-size:10.7px;line-height:16px;color:#1e1e1e;left:1368px;letter-spacing:-0.178px;">User.6</span>
<div class="a" style="left:1336px;top:671px;width:14px;height:14px;background:#b4dbd2;"></div>
<svg class="a" style="left:1352.5px;top:671.7px;" width="13" height="13" viewBox="0 0 13 13"><ellipse cx="6.5" cy="6.5" rx="6" ry="5.6" fill="#4a4a4a"/><path d="M1.6 6.5 Q6.5 1.6 11.4 6.5 Q6.5 11.4 1.6 6.5Z" fill="#f0f0f0"/><circle cx="6.5" cy="6.5" r="2.3" fill="#4a4a4a"/><circle cx="6.5" cy="6.5" r="0.9" fill="#f0f0f0"/></svg>
<span class="t" style="top:670.2px;font-size:10.7px;line-height:16px;color:#1e1e1e;left:1368px;letter-spacing:-0.178px;">User.7</span>
<div class="a" style="left:1336px;top:686px;width:14px;height:2px;background:#d8c852;"></div>
<svg class="a" style="left:1326px;top:177px;" width="6" height="9" viewBox="0 0 6 9"><path d="M0.5 0.5 L5 4.5 L0.5 8.5Z" fill="#2e3fe0"/></svg>
<svg class="a" style="left:1517px;top:176px;" width="12" height="512" viewBox="0 0 12 512"><path d="M2 8 L6 3 L10 8Z" fill="#8a8a8a"/><rect x="4" y="15" width="4.5" height="444" rx="2.2" fill="#8a8a8a"/><path d="M2 502 L6 507 L10 502Z" fill="#8a8a8a"/></svg>
<div class="a" style="left:1320px;top:690px;width:214px;height:21px;background:#f5f5f5;"></div>
<svg class="a" style="left:1331px;top:696px;" width="6" height="9" viewBox="0 0 6 9"><path d="M0.5 0.5 L4.5 4.5 L0.5 8.5Z" fill="#555"/></svg>
<span class="t" style="top:692.5px;font-size:10.7px;line-height:16px;color:#7a7a7a;left:1338.5px;letter-spacing:-0.043px;">Отображение слоёв</span>
<div class="a" style="left:1320px;top:713px;width:214px;height:1px;background:#dadada;"></div>
<span class="t" style="top:722px;font-size:10.7px;line-height:16px;color:#000;left:1323.5px;letter-spacing:-0.098px;">Наборы слоев (Ctrl+Tab):</span>
<div class="a" style="left:1324px;top:739px;width:206px;height:22px;background:#fff;border:1px solid #e2e2e2;border-bottom-color:#c4c4c4;border-radius:3px;"></div>
<span class="t" style="top:742px;font-size:12px;line-height:16px;color:#000;left:1327px;">---</span>
<svg class="a" style="left:1516px;top:747.0px;" width="10" height="6" viewBox="0 0 10 6"><path d="M1 1 L5 5 L9 1" fill="none" stroke="#555" stroke-width="1"/></svg>
<span class="t" style="top:764px;font-size:10.7px;line-height:16px;color:#000;left:1323.5px;letter-spacing:-0.090px;">Виды (Shift+Tab):</span>
<div class="a" style="left:1324px;top:781px;width:206px;height:22px;background:#fff;border:1px solid #e2e2e2;border-bottom-color:#c4c4c4;border-radius:3px;"></div>
<span class="t" style="top:784px;font-size:12px;line-height:16px;color:#000;left:1327px;">---</span>
<svg class="a" style="left:1516px;top:789.0px;" width="10" height="6" viewBox="0 0 10 6"><path d="M1 1 L5 5 L9 1" fill="none" stroke="#555" stroke-width="1"/></svg>
<div class="a" style="left:1320px;top:808px;width:214px;height:1px;background:#dadada;"></div>
<div class="a" style="left:1318px;top:812px;width:218px;height:21.5px;background:#b9b9b9;"></div>
<span class="t" style="top:815px;font-size:12px;line-height:16px;color:#000;left:1322px;letter-spacing:0.004px;">Фильтр выделения</span>
<div class="a" style="left:1322px;top:839.0px;width:13px;height:13px;background:#0a64ba;border-radius:2.5px;"><svg width="13" height="13" viewBox="0 0 13 13" style="position:absolute;left:0;top:0"><path d="M3 6.6 L5.5 9.1 L10.2 3.9" fill="none" stroke="#fff" stroke-width="1.4"/></svg></div>
<span class="t" style="top:838.3px;font-size:10.7px;line-height:16px;color:#000;left:1338.5px;letter-spacing:-0.369px;">Все элементы</span>
<div class="a" style="left:1322px;top:856.27px;width:13px;height:13px;background:#0a64ba;border-radius:2.5px;"><svg width="13" height="13" viewBox="0 0 13 13" style="position:absolute;left:0;top:0"><path d="M3 6.6 L5.5 9.1 L10.2 3.9" fill="none" stroke="#fff" stroke-width="1.4"/></svg></div>
<span class="t" style="top:855.57px;font-size:10.7px;line-height:16px;color:#000;left:1338.5px;letter-spacing:-0.314px;">Посад. места</span>
<div class="a" style="left:1322px;top:873.54px;width:13px;height:13px;background:#0a64ba;border-radius:2.5px;"><svg width="13" height="13" viewBox="0 0 13 13" style="position:absolute;left:0;top:0"><path d="M3 6.6 L5.5 9.1 L10.2 3.9" fill="none" stroke="#fff" stroke-width="1.4"/></svg></div>
<span class="t" style="top:872.84px;font-size:10.7px;line-height:16px;color:#000;left:1338.5px;letter-spacing:0.521px;">Дорожки</span>
<div class="a" style="left:1322px;top:890.81px;width:13px;height:13px;background:#0a64ba;border-radius:2.5px;"><svg width="13" height="13" viewBox="0 0 13 13" style="position:absolute;left:0;top:0"><path d="M3 6.6 L5.5 9.1 L10.2 3.9" fill="none" stroke="#fff" stroke-width="1.4"/></svg></div>
<span class="t" style="top:890.11px;font-size:10.7px;line-height:16px;color:#000;left:1338.5px;letter-spacing:-0.090px;">Конт. пл.</span>
<div class="a" style="left:1322px;top:908.08px;width:13px;height:13px;background:#0a64ba;border-radius:2.5px;"><svg width="13" height="13" viewBox="0 0 13 13" style="position:absolute;left:0;top:0"><path d="M3 6.6 L5.5 9.1 L10.2 3.9" fill="none" stroke="#fff" stroke-width="1.4"/></svg></div>
<span class="t" style="top:907.38px;font-size:10.7px;line-height:16px;color:#000;left:1338.5px;letter-spacing:0.005px;">Зоны</span>
<div class="a" style="left:1322px;top:925.35px;width:13px;height:13px;background:#0a64ba;border-radius:2.5px;"><svg width="13" height="13" viewBox="0 0 13 13" style="position:absolute;left:0;top:0"><path d="M3 6.6 L5.5 9.1 L10.2 3.9" fill="none" stroke="#fff" stroke-width="1.4"/></svg></div>
<span class="t" style="top:924.65px;font-size:10.7px;line-height:16px;color:#000;left:1338.5px;letter-spacing:-0.154px;">Размеры</span>
<div class="a" style="left:1322px;top:942.62px;width:13px;height:13px;background:#0a64ba;border-radius:2.5px;"><svg width="13" height="13" viewBox="0 0 13 13" style="position:absolute;left:0;top:0"><path d="M3 6.6 L5.5 9.1 L10.2 3.9" fill="none" stroke="#fff" stroke-width="1.4"/></svg></div>
<span class="t" style="top:941.92px;font-size:10.7px;line-height:16px;color:#000;left:1338.5px;letter-spacing:0.469px;">Точки</span>
<div class="a" style="left:1417px;top:839.0px;width:13px;height:13px;background:#fbfbfb;border:1px solid #9a9a9a;border-radius:2.5px;"></div>
<span class="t" style="top:838.3px;font-size:10.7px;line-height:16px;color:#000;left:1433px;letter-spacing:0.049px;">Заблокированные</span>
<div class="a" style="left:1417px;top:856.27px;width:13px;height:13px;background:#0a64ba;border-radius:2.5px;"><svg width="13" height="13" viewBox="0 0 13 13" style="position:absolute;left:0;top:0"><path d="M3 6.6 L5.5 9.1 L10.2 3.9" fill="none" stroke="#fff" stroke-width="1.4"/></svg></div>
<span class="t" style="top:855.57px;font-size:10.7px;line-height:16px;color:#000;left:1433px;letter-spacing:-0.352px;">Текст</span>
<div class="a" style="left:1417px;top:873.54px;width:13px;height:13px;background:#0a64ba;border-radius:2.5px;"><svg width="13" height="13" viewBox="0 0 13 13" style="position:absolute;left:0;top:0"><path d="M3 6.6 L5.5 9.1 L10.2 3.9" fill="none" stroke="#fff" stroke-width="1.4"/></svg></div>
<span class="t" style="top:872.84px;font-size:10.7px;line-height:16px;color:#000;left:1433px;letter-spacing:-0.281px;">Перех. отв.</span>
<div class="a" style="left:1417px;top:890.81px;width:13px;height:13px;background:#0a64ba;border-radius:2.5px;"><svg width="13" height="13" viewBox="0 0 13 13" style="position:absolute;left:0;top:0"><path d="M3 6.6 L5.5 9.1 L10.2 3.9" fill="none" stroke="#fff" stroke-width="1.4"/></svg></div>
<span class="t" style="top:890.11px;font-size:10.7px;line-height:16px;color:#000;left:1433px;letter-spacing:-0.117px;">Графика</span>
<div class="a" style="left:1417px;top:908.08px;width:13px;height:13px;background:#0a64ba;border-radius:2.5px;"><svg width="13" height="13" viewBox="0 0 13 13" style="position:absolute;left:0;top:0"><path d="M3 6.6 L5.5 9.1 L10.2 3.9" fill="none" stroke="#fff" stroke-width="1.4"/></svg></div>
<span class="t" style="top:907.38px;font-size:10.7px;line-height:16px;color:#000;left:1433px;letter-spacing:-0.144px;">Области правил</span>
<div class="a" style="left:1417px;top:925.35px;width:13px;height:13px;background:#0a64ba;border-radius:2.5px;"><svg width="13" height="13" viewBox="0 0 13 13" style="position:absolute;left:0;top:0"><path d="M3 6.6 L5.5 9.1 L10.2 3.9" fill="none" stroke="#fff" stroke-width="1.4"/></svg></div>
<span class="t" style="top:924.65px;font-size:10.7px;line-height:16px;color:#000;left:1433px;letter-spacing:-0.033px;">Прочие элементы</span>
<svg class="a" style="left:1522px;top:1006px;" width="12" height="12" viewBox="0 0 12 12"><g fill="#9a9a9a"><rect x="9" y="1" width="2" height="2"/><rect x="5" y="5" width="2" height="2"/><rect x="9" y="5" width="2" height="2"/><rect x="1" y="9" width="2" height="2"/><rect x="5" y="9" width="2" height="2"/><rect x="9" y="9" width="2" height="2"/></g></svg>
<div class="a" style="left:203px;top:340px;width:846px;height:408px;background:#f0f0f0;border-radius:8px;border:1px solid #0b66c0;box-shadow:0 6px 22px rgba(0,0,0,.4);overflow:hidden;"><div style="position:absolute;left:-1px;top:-1px;width:848px;height:30.7px;background:#0877d5"></div></div>
<span class="t" style="top:347.5px;font-size:12px;line-height:16px;color:#fff;left:212px;letter-spacing:0.342px;">Менеджер зон</span>
<svg class="a" style="left:1026px;top:350px;" width="11" height="11" viewBox="0 0 11 11"><path d="M0.5 0.5 L10.5 10.5 M10.5 0.5 L0.5 10.5" stroke="#fff" stroke-width="1.1"/></svg>
<div class="a" style="left:208px;top:375px;width:235px;height:23px;background:#fff;border:1px solid #e2e2e2;border-bottom-color:#c6c6c6;border-radius:3px;"></div>
<svg class="a" style="left:213px;top:378px;" width="16" height="16" viewBox="0 0 16 16"><circle cx="6.5" cy="6.5" r="4.8" fill="none" stroke="#111" stroke-width="1.7"/><path d="M10 10 L15 15" stroke="#111" stroke-width="2.2" stroke-linecap="round"/></svg>
<span class="t" style="top:378.5px;font-size:12px;line-height:16px;color:#8a8a8a;left:241px;letter-spacing:0.559px;">Поиск</span>
<svg class="a" style="left:420px;top:378px;" width="16" height="16" viewBox="0 0 16 16"><circle cx="8" cy="8" r="7" fill="none" stroke="#222" stroke-width="1.1"/><path d="M5 5 L11 11 M11 5 L5 11" stroke="#222" stroke-width="1.2"/></svg>
<div class="a" style="left:454px;top:379.5px;width:13px;height:13px;background:#0a64ba;border-radius:2.5px;"><svg width="13" height="13" viewBox="0 0 13 13" style="position:absolute;left:0;top:0"><path d="M3 6.6 L5.5 9.1 L10.2 3.9" fill="none" stroke="#fff" stroke-width="1.4"/></svg></div>
<span class="t" style="top:378.5px;font-size:12px;line-height:16px;color:#000;left:472px;letter-spacing:0.312px;">Имя</span>
<div class="a" style="left:507px;top:379.5px;width:13px;height:13px;background:#0a64ba;border-radius:2.5px;"><svg width="13" height="13" viewBox="0 0 13 13" style="position:absolute;left:0;top:0"><path d="M3 6.6 L5.5 9.1 L10.2 3.9" fill="none" stroke="#fff" stroke-width="1.4"/></svg></div>
<span class="t" style="top:378.5px;font-size:12px;line-height:16px;color:#000;left:524px;letter-spacing:0.062px;">Цепь</span>
<span class="t" style="top:408px;font-size:12px;line-height:16px;color:#000;left:208px;letter-spacing:-0.504px;">Слой:</span>
<div class="a" style="left:243px;top:405px;width:317px;height:22px;background:#fff;border:1px solid #e2e2e2;border-bottom-color:#c4c4c4;border-radius:3px;"></div>
<span class="t" style="top:408px;font-size:12px;line-height:16px;color:#000;left:246px;letter-spacing:-0.290px;">Все слои</span>
<svg class="a" style="left:546px;top:413.0px;" width="10" height="6" viewBox="0 0 10 6"><path d="M1 1 L5 5 L9 1" fill="none" stroke="#555" stroke-width="1"/></svg>
<div class="a" style="left:208px;top:431px;width:352px;height:253px;background:#fff;border:1px solid #dcdcdc;"></div>
<div class="a" style="left:319px;top:432px;width:1px;height:251px;background:#ececec;"></div>
<div class="a" style="left:429px;top:432px;width:1px;height:251px;background:#ececec;"></div>
<div class="a" style="left:540px;top:432px;width:1px;height:251px;background:#ececec;"></div>
<span class="t" style="top:435px;font-size:12px;line-height:16px;color:#000;left:213px;letter-spacing:0.312px;">Имя</span>
<span class="t" style="top:435px;font-size:12px;line-height:16px;color:#000;left:323px;letter-spacing:0.062px;">Цепь</span>
<span class="t" style="top:435px;font-size:12px;line-height:16px;color:#000;left:433px;letter-spacing:-0.062px;">Слои</span>
<span class="t" style="top:457.5px;font-size:12px;line-height:16px;color:#000;left:323px;letter-spacing:-0.341px;">M2_3V3</span>
<div class="a" style="left:433px;top:460px;width:11px;height:11px;background:#4fcbcb;"></div>
<span class="t" style="top:457.5px;font-size:12px;line-height:16px;color:#000;left:449px;letter-spacing:-0.272px;">In3.Cu</span>
<div class="a" style="left:209px;top:477px;width:331px;height:1px;background:#f0f0f0;"></div>
<span class="t" style="top:481px;font-size:12px;line-height:16px;color:#000;left:323px;letter-spacing:-0.341px;">M2_3V3</span>
<div class="a" style="left:433px;top:483px;width:11px;height:5px;background:#c83434;"></div>
<div class="a" style="left:433px;top:488px;width:11px;height:6px;background:#4fcbcb;"></div>
<span class="t" style="top:481px;font-size:12px;line-height:16px;color:#000;left:449px;letter-spacing:-0.287px;">F.Cu,In3.Cu</span>
<div class="a" style="left:209px;top:500px;width:331px;height:1px;background:#f0f0f0;"></div>
<span class="t" style="top:504.5px;font-size:12px;line-height:16px;color:#000;left:323px;letter-spacing:-0.341px;">M2_3V3</span>
<div class="a" style="left:433px;top:506px;width:11px;height:11px;background:#c83434;"></div>
<span class="t" style="top:504.5px;font-size:12px;line-height:16px;color:#000;left:449px;letter-spacing:-0.562px;">F.Cu</span>
<div class="a" style="left:209px;top:524px;width:331px;height:1px;background:#f0f0f0;"></div>
<span class="t" style="top:528px;font-size:12px;line-height:16px;color:#000;left:323px;letter-spacing:-0.004px;">/PCIe-M2/M2_LX</span>
<div class="a" style="left:433px;top:530px;width:11px;height:11px;background:#c83434;"></div>
<span class="t" style="top:528px;font-size:12px;line-height:16px;color:#000;left:449px;letter-spacing:-0.562px;">F.Cu</span>
<div class="a" style="left:209px;top:548px;width:331px;height:1px;background:#f0f0f0;"></div>
<span class="t" style="top:551.5px;font-size:12px;line-height:16px;color:#000;left:323px;letter-spacing:0.156px;">+5V</span>
<div class="a" style="left:433px;top:554px;width:11px;height:11px;background:#c83434;"></div>
<span class="t" style="top:551.5px;font-size:12px;line-height:16px;color:#000;left:449px;letter-spacing:-0.562px;">F.Cu</span>
<div class="a" style="left:209px;top:571px;width:331px;height:1px;background:#f0f0f0;"></div>
<span class="t" style="top:575px;font-size:12px;line-height:16px;color:#000;left:323px;letter-spacing:0.156px;">+5V</span>
<div class="a" style="left:433px;top:577px;width:11px;height:11px;background:#c83434;"></div>
<span class="t" style="top:575px;font-size:12px;line-height:16px;color:#000;left:449px;letter-spacing:-0.562px;">F.Cu</span>
<div class="a" style="left:209px;top:594px;width:331px;height:1px;background:#f0f0f0;"></div>
<span class="t" style="top:598.5px;font-size:12px;line-height:16px;color:#000;left:323px;letter-spacing:-0.341px;">M2_3V3</span>
<div class="a" style="left:433px;top:600px;width:11px;height:11px;background:#4fcbcb;"></div>
<span class="t" style="top:598.5px;font-size:12px;line-height:16px;color:#000;left:449px;letter-spacing:-0.272px;">In3.Cu</span>
<div class="a" style="left:209px;top:618px;width:331px;height:1px;background:#f0f0f0;"></div>
<span class="t" style="top:622px;font-size:12px;line-height:16px;color:#000;left:323px;letter-spacing:-0.312px;">+3V3_PI</span>
<div class="a" style="left:433px;top:624px;width:11px;height:11px;background:#c83434;"></div>
<span class="t" style="top:622px;font-size:12px;line-height:16px;color:#000;left:449px;letter-spacing:-0.562px;">F.Cu</span>
<div class="a" style="left:209px;top:642px;width:331px;height:1px;background:#f0f0f0;"></div>
<span class="t" style="top:645.5px;font-size:12px;line-height:16px;color:#000;left:323px;letter-spacing:-0.312px;">+3V3_PI</span>
<div class="a" style="left:433px;top:648px;width:11px;height:11px;background:#4d7fc4;"></div>
<span class="t" style="top:645.5px;font-size:12px;line-height:16px;color:#000;left:449px;letter-spacing:-1.062px;">B.Cu</span>
<div class="a" style="left:209px;top:665px;width:331px;height:18px;overflow:hidden;"><span class="t" style="left:114px;top:4.0px;line-height:16px;letter-spacing:-0.3px">M2_3V3</span><span class="t" style="left:240px;top:4.0px;line-height:16px;letter-spacing:-0.3px">F.Cu</span><div class="a" style="left:224px;top:6.5px;width:11px;height:11px;background:#c83434"></div></div>
<div class="a" style="left:209px;top:453px;width:332px;height:24px;border:1px solid #8f8f8f;"></div>
<svg class="a" style="left:543px;top:433px;" width="14" height="250" viewBox="0 0 14 250"><path d="M3 11 L7 6 L11 11Z" fill="#8a8a8a"/><rect x="4.2" y="17" width="5.6" height="150" rx="2.8" fill="#7d7d7d"/><path d="M3 238 L7 243 L11 238Z" fill="#8a8a8a"/></svg>
<div class="a" style="left:209px;top:689px;width:23px;height:23px;background:#fdfdfd;border:1px solid #d6d6d6;border-bottom-color:#c2c2c2;border-radius:4px;"></div>
<svg class="a" style="left:212.5px;top:689px;" width="16" height="22" viewBox="0 0 16 22"><path d="M4 6.5 H12 M8 15 V8.5 M5 11.5 L8 8.5 L11 11.5" fill="none" stroke="#222" stroke-width="1.1"/></svg>
<div class="a" style="left:237px;top:689px;width:23px;height:23px;background:#fdfdfd;border:1px solid #d6d6d6;border-bottom-color:#c2c2c2;border-radius:4px;"></div>
<svg class="a" style="left:240.5px;top:689px;" width="16" height="22" viewBox="0 0 16 22"><path d="M8 15.5 V6.5 M4.5 10 L8 6.5 L11.5 10" fill="none" stroke="#222" stroke-width="1.1"/></svg>
<div class="a" style="left:265px;top:689px;width:23px;height:23px;background:#fdfdfd;border:1px solid #d6d6d6;border-bottom-color:#c2c2c2;border-radius:4px;"></div>
<svg class="a" style="left:268.5px;top:689px;" width="16" height="22" viewBox="0 0 16 22"><path d="M8 6.5 V15.5 M4.5 12 L8 15.5 L11.5 12" fill="none" stroke="#222" stroke-width="1.1"/></svg>
<div class="a" style="left:293px;top:689px;width:23px;height:23px;background:#fdfdfd;border:1px solid #d6d6d6;border-bottom-color:#c2c2c2;border-radius:4px;"></div>
<svg class="a" style="left:296.5px;top:689px;" width="16" height="22" viewBox="0 0 16 22"><path d="M4 15.5 H12 M8 6 V12.5 M5 9.5 L8 12.5 L11 9.5" fill="none" stroke="#222" stroke-width="1.1"/></svg>
<div class="a" style="left:207px;top:715px;width:838px;height:1px;background:#d4d4d4;"></div>
<div class="a" style="left:208px;top:725.7px;width:13px;height:13px;background:#fbfbfb;border:1px solid #9a9a9a;border-radius:2.5px;"></div>
<span class="t" style="top:725.5px;font-size:12px;line-height:16px;color:#000;left:225px;letter-spacing:0.026px;">Перезалить зоны</span>
<div class="a" style="left:674px;top:722px;width:198px;height:23px;background:#fdfdfd;border:1px solid #d6d6d6;border-bottom-color:#c2c2c2;border-radius:4px;"></div>
<span class="t" style="top:725.5px;font-size:12px;line-height:16px;color:#000;left:684px;letter-spacing:0.244px;">Обновить отображаемые зоны</span>
<div class="a" style="left:882px;top:722px;width:76px;height:23px;background:#fdfdfd;border:1px solid #d6d6d6;border-bottom-color:#c2c2c2;border-radius:4px;"></div>
<span class="t" style="top:725.5px;font-size:12px;line-height:16px;color:#000;left:911.75px;letter-spacing:0.172px;">ОК</span>
<div class="a" style="left:968px;top:722px;width:76px;height:23px;background:#fdfdfd;border:1px solid #d6d6d6;border-bottom-color:#c2c2c2;border-radius:4px;"></div>
<span class="t" style="top:725.5px;font-size:12px;line-height:16px;color:#000;left:984.5px;letter-spacing:-0.013px;">Отмена</span>
<span class="t" style="top:378.5px;font-size:12px;line-height:16px;color:#000;left:569px;letter-spacing:0.332px;">Имя зоны:</span>
<div class="a" style="left:634px;top:375px;width:411px;height:22px;background:#fff;border-bottom:1px solid #8a8a8a;border-radius:3px;"></div>
<span class="t" style="top:403px;font-size:12px;line-height:16px;color:#000;left:569px;letter-spacing:0.230px;">Имя цепи:</span>
<div class="a" style="left:634px;top:400px;width:411px;height:22px;background:#fff;border:1px solid #e2e2e2;border-bottom-color:#c4c4c4;border-radius:3px;"></div>
<span class="t" style="top:403px;font-size:12px;line-height:16px;color:#000;left:637px;letter-spacing:-0.341px;">M2_3V3</span>
<svg class="a" style="left:1031px;top:408.0px;" width="10" height="6" viewBox="0 0 10 6"><path d="M1 1 L5 5 L9 1" fill="none" stroke="#555" stroke-width="1"/></svg>
<div class="a" style="left:570px;top:427.9px;width:13px;height:13px;background:#fbfbfb;border:1px solid #9a9a9a;border-radius:2.5px;"></div>
<span class="t" style="top:427.5px;font-size:12px;line-height:16px;color:#000;left:587px;letter-spacing:0.367px;">Заблокировано</span>
<span class="t" style="top:451.5px;font-size:12px;line-height:16px;color:#000;left:575px;letter-spacing:0.134px;">Зазоры и соединения конт. пл.</span>
<span class="t" style="top:451.5px;font-size:12px;line-height:16px;color:#000;left:757px;letter-spacing:0.184px;">Переопределения отображения</span>
<div class="a" style="left:943px;top:447px;width:74px;height:24px;background:#f9f9f9;"></div>
<span class="t" style="top:450px;font-size:12px;line-height:16px;color:#000;left:948px;letter-spacing:0.314px;">Штриховка</span>
<div class="a" style="left:571px;top:470px;width:474px;height:162px;background:#f9f9f9;border-radius:3px;"></div>
<div class="a" style="left:580px;top:475.3px;width:13px;height:13px;background:#fbfbfb;border:1px solid #9a9a9a;border-radius:2.5px;"></div>
<span class="t" style="top:475px;font-size:12px;line-height:16px;color:#000;left:597px;letter-spacing:0.314px;">Штриховка</span>
<span class="t" style="top:498px;font-size:12px;line-height:16px;color:#a6a6a6;left:579px;letter-spacing:-0.047px;">Ориентация:</span>
<div class="a" style="left:702px;top:495px;width:98px;height:22px;background:#f0f0f0;border-radius:3px;"></div>
<span class="t" style="top:498.5px;font-size:12px;line-height:16px;color:#909090;left:706px;">0</span>
<span class="t" style="top:496px;font-size:12px;line-height:16px;color:#a6a6a6;left:806px;">°</span>
<span class="t" style="top:524px;font-size:12px;line-height:16px;color:#a6a6a6;left:579px;letter-spacing:0.070px;">Ширина штриха:</span>
<div class="a" style="left:702px;top:521px;width:98px;height:22px;background:#f0f0f0;border-radius:3px;"></div>
<span class="t" style="top:524.5px;font-size:12px;line-height:16px;color:#909090;left:706px;">1</span>
<span class="t" style="top:524px;font-size:12px;line-height:16px;color:#a6a6a6;left:805px;letter-spacing:1.000px;">mm</span>
<span class="t" style="top:550px;font-size:12px;line-height:16px;color:#a6a6a6;left:579px;letter-spacing:0.194px;">Ширина зазора:</span>
<div class="a" style="left:702px;top:547px;width:98px;height:22px;background:#f0f0f0;border-radius:3px;"></div>
<span class="t" style="top:550.5px;font-size:12px;line-height:16px;color:#909090;left:706px;">1,5</span>
<span class="t" style="top:550px;font-size:12px;line-height:16px;color:#a6a6a6;left:805px;letter-spacing:1.000px;">mm</span>
<span class="t" style="top:576px;font-size:12px;line-height:16px;color:#a6a6a6;left:579px;letter-spacing:0.030px;">Тип скругления:</span>
<div class="a" style="left:702px;top:573px;width:98px;height:22px;background:#f0f0f0;border-radius:3px;"></div>
<span class="t" style="top:576.5px;font-size:12px;line-height:16px;color:#909090;left:706px;">0</span>
<svg class="a" style="left:788px;top:574px;" width="10" height="20" viewBox="0 0 10 20"><path d="M2 6.5 L5 3 L8 6.5Z M2 13.5 L5 17 L8 13.5Z" fill="#9a9a9a"/></svg>
<span class="t" style="top:602px;font-size:12px;line-height:16px;color:#a6a6a6;left:579px;letter-spacing:0.149px;">Уровень скругления:</span>
<div class="a" style="left:702px;top:599px;width:98px;height:22px;background:#f0f0f0;border-radius:3px;"></div>
<span class="t" style="top:602.5px;font-size:12px;line-height:16px;color:#909090;left:706px;">0,10</span>
<svg class="a" style="left:788px;top:600px;" width="10" height="20" viewBox="0 0 10 20"><path d="M2 6.5 L5 3 L8 6.5Z M2 13.5 L5 17 L8 13.5Z" fill="#9a9a9a"/></svg>
<div class="a" style="left:785px;top:573px;width:16px;height:22px;border:1px solid #cfcfcf;border-left:none;border-radius:0 3px 3px 0;"></div>
<span class="t" style="top:475px;font-size:12px;line-height:16px;color:#a6a6a6;left:842px;letter-spacing:0.079px;">Переопределения смещения</span>
<div class="a" style="left:842px;top:494px;width:194px;height:20px;background:#f0f0f0;"></div>
<div class="a" style="left:935px;top:494px;width:1px;height:20px;background:#dedede;"></div>
<span class="t" style="top:496.5px;font-size:12px;line-height:16px;color:#a6a6a6;left:844px;letter-spacing:-0.229px;">Слой</span>
<span class="t" style="top:496.5px;font-size:12px;line-height:16px;color:#a6a6a6;left:955px;letter-spacing:-0.038px;">Смещение X</span>
<div class="a" style="left:842px;top:514px;width:194px;height:69px;background:#fff;"></div>
<div class="a" style="left:842px;top:583px;width:194px;height:17px;background:#f0f0f0;"></div>
<svg class="a" style="left:842px;top:583px;" width="194" height="17" viewBox="0 0 194 17"><path d="M12 4.5 L6 8.5 L12 12.5Z M182 4.5 L188 8.5 L182 12.5Z" fill="#7a7a7a"/><rect x="19" y="6" width="91" height="5" rx="2.5" fill="#8a8a8a"/></svg>
<div class="a" style="left:845px;top:605px;width:21px;height:23px;background:#fcfcfc;border-radius:3px;"></div>
<svg class="a" style="left:848.5px;top:610.5px;" width="11" height="11" viewBox="0 0 11 11"><path d="M5.5 1 V10 M1 5.5 H10" stroke="#222" stroke-width="1.1"/></svg>
<div class="a" style="left:883px;top:605px;width:21px;height:23px;background:#fcfcfc;border-radius:3px;"></div>
<svg class="a" style="left:888px;top:610px;" width="10" height="12" viewBox="0 0 10 12"><path d="M1 2.5 H9 M3.5 2.5 V1 H6.5 V2.5" stroke="#333" stroke-width="1.2" fill="none"/><path d="M1.8 3.8 H8.2 L7.6 11 H2.4Z" fill="#333"/></svg>
<span class="t" style="top:648.5px;font-size:12px;line-height:16px;color:#000;left:573px;letter-spacing:0.054px;">Сглаживание углов:</span>
<div class="a" style="left:690px;top:646px;width:174px;height:22px;background:#fff;border:1px solid #e2e2e2;border-bottom-color:#c4c4c4;border-radius:3px;"></div>
<span class="t" style="top:649px;font-size:12px;line-height:16px;color:#000;left:693px;letter-spacing:0.194px;">Скругление</span>
<svg class="a" style="left:850px;top:654.0px;" width="10" height="6" viewBox="0 0 10 6"><path d="M1 1 L5 5 L9 1" fill="none" stroke="#555" stroke-width="1"/></svg>
<span class="t" style="top:648.5px;font-size:12px;line-height:16px;color:#000;left:875px;letter-spacing:-0.281px;">Радиус:</span>
<div class="a" style="left:979px;top:646px;width:70px;height:22px;background:#fff;border-bottom:1px solid #8a8a8a;border-radius:3px 0 0 3px;"></div>
<span class="t" style="top:648.5px;font-size:12px;line-height:16px;color:#000;left:984px;">0,5</span>
<span class="t" style="top:674.5px;font-size:12px;line-height:16px;color:#000;left:573px;letter-spacing:0.055px;">Удалять островки:</span>
<div class="a" style="left:690px;top:672px;width:174px;height:22px;background:#fff;border:1px solid #e2e2e2;border-bottom-color:#c4c4c4;border-radius:3px;"></div>
<span class="t" style="top:675px;font-size:12px;line-height:16px;color:#000;left:693px;letter-spacing:-0.141px;">Всегда</span>
<svg class="a" style="left:850px;top:680.0px;" width="10" height="6" viewBox="0 0 10 6"><path d="M1 1 L5 5 L9 1" fill="none" stroke="#555" stroke-width="1"/></svg>
<div class="a" style="left:571px;top:703px;width:58px;height:9px;background:#f9f9f9;border-radius:3px 3px 0 0;overflow:hidden;"><div class="a" style="left:7px;top:5px;width:9px;height:9px;background:#4fcbcb"></div><span class="t" style="left:19px;top:1px;line-height:14px;font-size:11px;">In3.Cu</span></div>
<div class="a" style="left:0;top:0;width:1536px;height:1020px;border:1px solid #a8a8a8;border-radius:9px;box-shadow:0 0 0 12px #d2d2d2;pointer-events:none"></div>
</body></html>
